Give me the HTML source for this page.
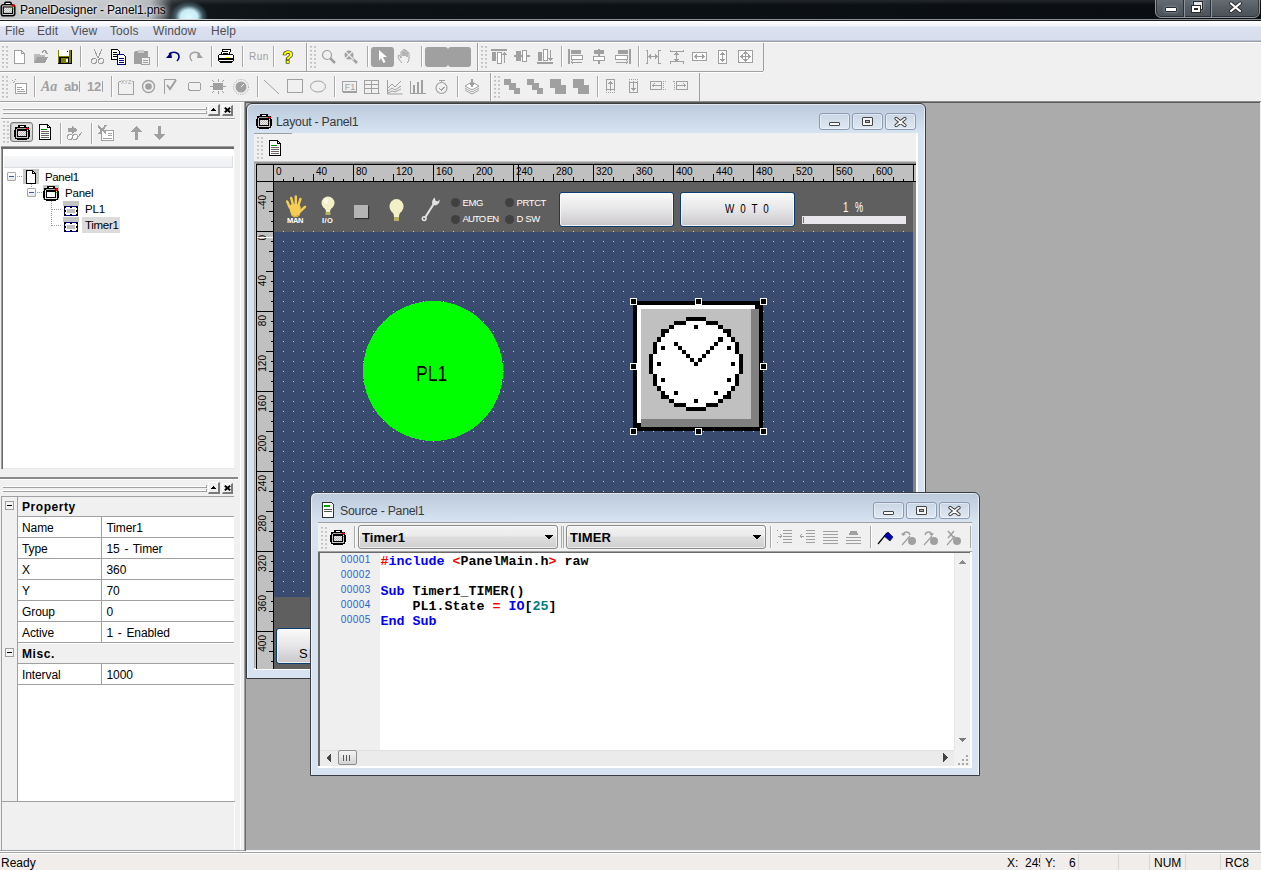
<!DOCTYPE html>
<html><head><meta charset="utf-8">
<style>
*{margin:0;padding:0;box-sizing:border-box}
html,body{width:1261px;height:870px;overflow:hidden;background:#f0f0f0;font-family:"Liberation Sans",sans-serif;font-size:12px;color:#000}
.a{position:absolute}
.t{position:absolute;white-space:nowrap;line-height:1}
svg.i{position:absolute;overflow:visible;width:16px;height:16px}
</style></head><body>
<div class="a" style="left:0px;top:0px;width:1261px;height:20px;background:linear-gradient(90deg,#c6c9cc 0px,#c3c6c9 120px,#b0b4b8 150px,#6a6f74 162px,#262b30 172px,#12171c 190px,#0d1217 300px,#0a0e13 1261px);"></div>
<div class="a" style="left:150px;top:0px;width:80px;height:20px;background:radial-gradient(ellipse 19px 16px at 39px 17px,rgba(220,250,255,1) 0%,rgba(205,242,252,.97) 45%,rgba(110,150,165,.5) 72%,rgba(60,80,90,0) 100%);"></div>
<div class="a" style="left:0px;top:0px;width:1261px;height:5px;background:linear-gradient(rgba(255,255,255,.10),rgba(255,255,255,0));"></div>
<div class="a" style="left:0px;top:19px;width:1261px;height:1px;background:linear-gradient(90deg,#e8eaec 0,#d0d4d8 200px,#8a9096 260px,#8a9096 1261px);"></div>
<div class="a" style="left:0px;top:20px;width:1261px;height:1px;background:#1a1a1a;"></div>
<svg class="i" style="left:0px;top:1px" viewBox="0 0 16 16"><rect x="4.8" y="1.3" width="6.4" height="3" rx="1.2" fill="#fff" stroke="#000" stroke-width="1.5"/><rect x="1.2" y="3.6" width="13.6" height="11.2" rx="2.2" fill="#c8c8c8" stroke="#000" stroke-width="1.45"/><rect x="3.3" y="6" width="9.2" height="6.4" fill="#eee" stroke="#000" stroke-width="1.1"/><path d="M4 7h1M6 7h1M8 7h1M10 7h1M5 8h1M7 8h1M9 8h1M11 8h1M4 9h1M6 9h1M8 9h1M10 9h1M5 10h1M7 10h1M9 10h1M11 10h1M4 11h1M6 11h1M8 11h1M10 11h1" stroke="#bbb" stroke-width="1" shape-rendering="crispEdges"/><path d="M3 4.6h9" stroke="#999" stroke-width=".8"/><path d="M13.2 3v3.2M11.6 4.6h3.2" stroke="#f00" stroke-width="1.3"/><rect x="12.7" y="6.2" width="1" height="1" fill="#ff0"/><rect x="12.7" y="7.2" width="1" height="1.2" fill="#0c0"/></svg>
<div class="t" style="left:20px;top:3.5px;font-size:12px;color:#000;letter-spacing:-0.15px;text-shadow:0 0 6px #fff,0 0 3px rgba(255,255,255,.8)">PanelDesigner - Panel1.pns</div>
<div class="a" style="left:1155px;top:-4px;width:105px;height:22px;border:1px solid #8c939a;border-radius:0 0 6px 6px;background:linear-gradient(#6a7178,#575e65 50%,#4a5157);box-shadow:inset 0 0 0 1px rgba(20,25,30,.55)"></div>
<div class="a" style="left:1183px;top:0px;width:1px;height:17px;background:#2a3036;"></div>
<div class="a" style="left:1184px;top:0px;width:1px;height:17px;background:#8c939a;"></div>
<div class="a" style="left:1210px;top:0px;width:1px;height:17px;background:#2a3036;"></div>
<div class="a" style="left:1211px;top:0px;width:1px;height:17px;background:#8c939a;"></div>
<div class="a" style="left:1165px;top:7px;width:12px;height:5px;background:#fff;border:1px solid #2a2a2a;border-radius:1px;box-shadow:0 0 3px rgba(170,210,255,.7)"></div>
<div class="a" style="left:1193px;top:1px;width:10px;height:9px;background:#e8e8e8;border:1px solid #2a2a2a;box-shadow:0 0 3px rgba(170,210,255,.7)"></div>
<div class="a" style="left:1191px;top:5px;width:10px;height:8px;background:#fff;border:1px solid #2a2a2a"></div>
<div class="a" style="left:1194px;top:8px;width:4px;height:2px;background:#7f95a8;border:1px solid #2a2a2a"></div>
<svg class="i" style="left:1229px;top:2px;width:13px;height:11px" viewBox="0 0 13 11"><path d="M2 1.5l9 7.5M11 1.5l-9 7.5" stroke="#2a2a2a" stroke-width="4" stroke-linecap="round"/><path d="M2 1.5l9 7.5M11 1.5l-9 7.5" stroke="#fff" stroke-width="2.2" stroke-linecap="round"/></svg>
<div class="a" style="left:0px;top:21px;width:1261px;height:19px;background:linear-gradient(#fdfdfe 0px,#f2f4fa 5px,#dde2f1 6px,#d8ddee 18px);"></div>
<div class="a" style="left:0px;top:40px;width:1261px;height:1px;background:#b7bdd3;"></div>
<div class="a" style="left:0px;top:41px;width:1261px;height:1px;background:#a0a0a0;"></div>
<div class="a" style="left:0px;top:42px;width:1261px;height:1px;background:#fff;"></div>
<div class="t" style="left:5px;top:24.6px;font-size:12px;color:#505050;letter-spacing:0.1px">File</div>
<div class="t" style="left:37px;top:24.6px;font-size:12px;color:#505050;letter-spacing:0.1px">Edit</div>
<div class="t" style="left:71px;top:24.6px;font-size:12px;color:#505050;letter-spacing:0.1px">View</div>
<div class="t" style="left:110px;top:24.6px;font-size:12px;color:#505050;letter-spacing:0.1px">Tools</div>
<div class="t" style="left:153px;top:24.6px;font-size:12px;color:#505050;letter-spacing:0.1px">Window</div>
<div class="t" style="left:211px;top:24.6px;font-size:12px;color:#505050;letter-spacing:0.1px">Help</div>
<div class="a" style="left:0px;top:851px;width:1261px;height:1px;background:#fff;"></div>
<div class="a" style="left:0px;top:852px;width:1261px;height:1px;background:#a0a0a0;"></div>
<div class="a" style="left:0px;top:853px;width:1261px;height:1px;background:#fff;"></div>
<div class="a" style="left:0px;top:854px;width:1261px;height:16px;background:#f0edeb;"></div>
<div class="t" style="left:1px;top:856.7px;font-size:12px;color:#000;">Ready</div>
<div class="a" style="left:1040px;top:854px;width:1px;height:16px;background:#d9d5d3;"></div>
<div class="a" style="left:1078px;top:854px;width:1px;height:16px;background:#d9d5d3;"></div>
<div class="a" style="left:1118px;top:854px;width:1px;height:16px;background:#d9d5d3;"></div>
<div class="a" style="left:1149px;top:854px;width:1px;height:16px;background:#d9d5d3;"></div>
<div class="a" style="left:1185px;top:854px;width:1px;height:16px;background:#d9d5d3;"></div>
<div class="a" style="left:1220px;top:854px;width:1px;height:16px;background:#d9d5d3;"></div>
<div class="t" style="left:1007px;top:856.7px;font-size:12px;color:#000;">X:</div>
<div class="a" style="left:1025px;top:853px;width:15px;height:17px;overflow:hidden"><div class="t" style="left:0px;top:3.7px;font-size:12px;color:#000;">245</div>
</div><div class="t" style="left:1045px;top:856.7px;font-size:12px;color:#000;">Y:</div>
<div class="t" style="left:1069px;top:856.7px;font-size:12px;color:#000;">6</div>
<div class="t" style="left:1154px;top:856.7px;font-size:12px;color:#000;">NUM</div>
<div class="t" style="left:1225px;top:856.7px;font-size:12px;color:#000;">RC8</div>
<div class="a" style="left:0px;top:71px;width:763px;height:1px;background:#a0a0a0;"></div>
<div class="a" style="left:0px;top:72px;width:763px;height:1px;background:#fff;"></div>
<div class="a" style="left:306px;top:43px;width:1px;height:28px;background:#a0a0a0;"></div>
<div class="a" style="left:307px;top:43px;width:1px;height:28px;background:#fff;"></div>
<div class="a" style="left:477px;top:43px;width:1px;height:28px;background:#a0a0a0;"></div>
<div class="a" style="left:478px;top:43px;width:1px;height:28px;background:#fff;"></div>
<div class="a" style="left:763px;top:43px;width:1px;height:28px;background:#a0a0a0;"></div>
<div class="a" style="left:490px;top:73px;width:1px;height:28px;background:#a0a0a0;"></div>
<div class="a" style="left:491px;top:73px;width:1px;height:28px;background:#fff;"></div>
<div class="a" style="left:699px;top:73px;width:1px;height:28px;background:#a0a0a0;"></div>
<div class="a" style="left:0px;top:101px;width:1261px;height:1px;background:#a0a0a0;"></div>
<div class="a" style="left:0px;top:102px;width:1261px;height:1px;background:#fff;"></div>
<div class="a" style="left:2px;top:46px;width:2px;height:22px;background:repeating-linear-gradient(180deg,#bdbdbd 0 1px,#d4d4d4 1px 2px,transparent 2px 4px);"></div>
<div class="a" style="left:6px;top:46px;width:2px;height:22px;background:repeating-linear-gradient(180deg,#c8c8c8 0 2px,transparent 2px 4px);"></div>
<div class="a" style="left:310px;top:46px;width:2px;height:22px;background:repeating-linear-gradient(180deg,#bdbdbd 0 1px,#d4d4d4 1px 2px,transparent 2px 4px);"></div>
<div class="a" style="left:314px;top:46px;width:2px;height:22px;background:repeating-linear-gradient(180deg,#c8c8c8 0 2px,transparent 2px 4px);"></div>
<div class="a" style="left:481px;top:46px;width:2px;height:22px;background:repeating-linear-gradient(180deg,#bdbdbd 0 1px,#d4d4d4 1px 2px,transparent 2px 4px);"></div>
<div class="a" style="left:485px;top:46px;width:2px;height:22px;background:repeating-linear-gradient(180deg,#c8c8c8 0 2px,transparent 2px 4px);"></div>
<div class="a" style="left:2px;top:76px;width:2px;height:22px;background:repeating-linear-gradient(180deg,#bdbdbd 0 1px,#d4d4d4 1px 2px,transparent 2px 4px);"></div>
<div class="a" style="left:6px;top:76px;width:2px;height:22px;background:repeating-linear-gradient(180deg,#c8c8c8 0 2px,transparent 2px 4px);"></div>
<div class="a" style="left:494px;top:76px;width:2px;height:22px;background:repeating-linear-gradient(180deg,#bdbdbd 0 1px,#d4d4d4 1px 2px,transparent 2px 4px);"></div>
<div class="a" style="left:498px;top:76px;width:2px;height:22px;background:repeating-linear-gradient(180deg,#c8c8c8 0 2px,transparent 2px 4px);"></div>
<div class="a" style="left:80px;top:46px;width:1px;height:21px;background:#a9a9a9;"></div>
<div class="a" style="left:81px;top:46px;width:1px;height:21px;background:#fff;"></div>
<div class="a" style="left:157px;top:46px;width:1px;height:21px;background:#a9a9a9;"></div>
<div class="a" style="left:158px;top:46px;width:1px;height:21px;background:#fff;"></div>
<div class="a" style="left:211px;top:46px;width:1px;height:21px;background:#a9a9a9;"></div>
<div class="a" style="left:212px;top:46px;width:1px;height:21px;background:#fff;"></div>
<div class="a" style="left:242px;top:46px;width:1px;height:21px;background:#a9a9a9;"></div>
<div class="a" style="left:243px;top:46px;width:1px;height:21px;background:#fff;"></div>
<div class="a" style="left:273px;top:46px;width:1px;height:21px;background:#a9a9a9;"></div>
<div class="a" style="left:274px;top:46px;width:1px;height:21px;background:#fff;"></div>
<div class="a" style="left:367px;top:46px;width:1px;height:21px;background:#a9a9a9;"></div>
<div class="a" style="left:368px;top:46px;width:1px;height:21px;background:#fff;"></div>
<div class="a" style="left:421px;top:46px;width:1px;height:21px;background:#a9a9a9;"></div>
<div class="a" style="left:422px;top:46px;width:1px;height:21px;background:#fff;"></div>
<div class="a" style="left:561px;top:46px;width:1px;height:21px;background:#a9a9a9;"></div>
<div class="a" style="left:562px;top:46px;width:1px;height:21px;background:#fff;"></div>
<div class="a" style="left:638px;top:46px;width:1px;height:21px;background:#a9a9a9;"></div>
<div class="a" style="left:639px;top:46px;width:1px;height:21px;background:#fff;"></div>
<div class="a" style="left:34px;top:76px;width:1px;height:21px;background:#a9a9a9;"></div>
<div class="a" style="left:35px;top:76px;width:1px;height:21px;background:#fff;"></div>
<div class="a" style="left:111px;top:76px;width:1px;height:21px;background:#a9a9a9;"></div>
<div class="a" style="left:112px;top:76px;width:1px;height:21px;background:#fff;"></div>
<div class="a" style="left:257px;top:76px;width:1px;height:21px;background:#a9a9a9;"></div>
<div class="a" style="left:258px;top:76px;width:1px;height:21px;background:#fff;"></div>
<div class="a" style="left:334px;top:76px;width:1px;height:21px;background:#a9a9a9;"></div>
<div class="a" style="left:335px;top:76px;width:1px;height:21px;background:#fff;"></div>
<div class="a" style="left:457px;top:76px;width:1px;height:21px;background:#a9a9a9;"></div>
<div class="a" style="left:458px;top:76px;width:1px;height:21px;background:#fff;"></div>
<div class="a" style="left:597px;top:76px;width:1px;height:21px;background:#a9a9a9;"></div>
<div class="a" style="left:598px;top:76px;width:1px;height:21px;background:#fff;"></div>
<svg class="i" style="left:12px;top:49px;width:16px;height:16px" viewBox="0 0 16 16" shape-rendering="crispEdges"><path d="M2.5 1.5h7l3 3v10h-10z M9.5 1.5v3h3" fill="#fff" stroke="#a0a0a0"/></svg>
<svg class="i" style="left:33px;top:49px;width:16px;height:16px" viewBox="0 0 16 16" shape-rendering="crispEdges"><path d="M1 5h5l1 1h5v2H4l-3 6z" fill="#bbb"/><path d="M1 14l3-6h11l-3 6z" fill="#a0a0a0"/><path d="M9 4c1-3 4-3 5 0" fill="none" stroke="#a0a0a0" stroke-width="1.3"/><path d="M12 3l3 1-1 2z" fill="#a0a0a0"/></svg>
<svg class="i" style="left:57px;top:49px;width:16px;height:16px" viewBox="0 0 16 16" shape-rendering="crispEdges"><rect x="0.5" y="0.5" width="14" height="14" fill="#000"/><rect x="2" y="1" width="10" height="6" fill="#fff"/><rect x="1" y="1" width="1" height="13" fill="#808000"/><rect x="12" y="1" width="2" height="13" fill="#808000"/><rect x="2" y="7" width="10" height="1" fill="#808000"/><rect x="4" y="9" width="7" height="5" fill="#808000"/><rect x="9" y="10" width="2" height="3" fill="#fff"/><rect x="10" y="2" width="1" height="1" fill="#000"/></svg>
<svg class="i" style="left:90px;top:49px;width:16px;height:16px" viewBox="0 0 16 16" shape-rendering="crispEdges"><path d="M4 0l4 9M12 0l-4 9" stroke="#a0a0a0" fill="none"/><circle cx="4" cy="12" r="2.5" fill="none" stroke="#a0a0a0"/><circle cx="11" cy="12" r="2.5" fill="none" stroke="#a0a0a0"/></svg>
<svg class="i" style="left:111px;top:49px;width:16px;height:16px" viewBox="0 0 16 16" shape-rendering="crispEdges"><path d="M0.5 0.5h6l2 2v8h-8z" fill="#fff" stroke="#000"/><path d="M2 3h4M2 5h4M2 7h4" stroke="#000"/><path d="M6.5 5.5h6l2 2v8h-8z" fill="#fff" stroke="#000080"/><path d="M8 9h5M8 11h5M8 13h5" stroke="#000080"/></svg>
<svg class="i" style="left:134px;top:49px;width:16px;height:16px" viewBox="0 0 16 16" shape-rendering="crispEdges"><rect x="0" y="2" width="14" height="13" rx="2" fill="#a0a0a0"/><rect x="4" y="1" width="6" height="3" fill="#ccc"/><path d="M7.5 8.5h8v7h-8z" fill="#eee" stroke="#a0a0a0"/><path d="M9 11h5M9 13h5" stroke="#a0a0a0"/></svg>
<svg class="i" style="left:166px;top:49px;width:16px;height:16px" viewBox="0 0 16 16" shape-rendering="crispEdges"><path d="M3 5c4-3 10-2 10 3c0 2-1 3-2 4" fill="none" stroke="#000080" stroke-width="1.6" shape-rendering="auto"/><path d="M0 9l5-6 1 6z" fill="#000080" shape-rendering="auto"/></svg>
<svg class="i" style="left:188px;top:49px;width:16px;height:16px" viewBox="0 0 16 16" shape-rendering="crispEdges"><path d="M12 5c-4-3-10-2-10 3c0 2 1 3 2 4" fill="none" stroke="#a0a0a0" stroke-width="1.4" shape-rendering="auto"/><path d="M15 9l-5-6-1 6z" fill="#a0a0a0" shape-rendering="auto"/></svg>
<svg class="i" style="left:218px;top:49px;width:16px;height:16px" viewBox="0 0 16 16" shape-rendering="crispEdges"><path d="M4.5 0.5h8l-1 5h-8z" fill="#fff" stroke="#000"/><path d="M5 2h5M5 4h5" stroke="#000"/><rect x="0.5" y="5.5" width="15" height="7" rx="2" fill="#fff" stroke="#000"/><rect x="0" y="9" width="16" height="2" fill="#000"/><rect x="7" y="8" width="4" height="1" fill="#ff0"/><rect x="2" y="12" width="12" height="2" fill="#000"/></svg>
<div class="t" style="left:249px;top:52px;font-size:10px;color:#a0a0a0;letter-spacing:0.5px">Run</div>
<svg class="i" style="left:281px;top:49px;width:16px;height:16px" viewBox="0 0 16 16" shape-rendering="crispEdges"><text x="7" y="14" font-family="Liberation Sans" font-weight="bold" font-size="17" text-anchor="middle" fill="#ff0" stroke="#000" stroke-width="1.2" paint-order="stroke">?</text></svg>
<svg class="i" style="left:321px;top:49px;width:16px;height:16px" viewBox="0 0 16 16" shape-rendering="crispEdges"><circle cx="6" cy="6" r="4.5" fill="none" stroke="#a0a0a0" stroke-width="1.2" shape-rendering="auto"/><path d="M9 9l5 5" stroke="#a0a0a0" stroke-width="2.5" shape-rendering="auto"/></svg>
<svg class="i" style="left:343px;top:49px;width:16px;height:16px" viewBox="0 0 16 16" shape-rendering="crispEdges"><circle cx="6" cy="6" r="4.5" fill="#a0a0a0" shape-rendering="auto"/><path d="M9 9l5 5" stroke="#a0a0a0" stroke-width="2.5" shape-rendering="auto"/><path d="M1 1l10 10M11 1L1 11" stroke="#eee" stroke-width="1.2" shape-rendering="auto"/></svg>
<div class="a" style="left:371px;top:47px;width:23px;height:20px;background:#a0a0a0;border-radius:3px"></div>
<svg class="i" style="left:374px;top:49px;width:16px;height:16px" viewBox="0 0 16 16" shape-rendering="crispEdges"><path d="M5 1l8 7h-4l2.5 5-2 1-2.5-5-2 3z" fill="#fff" shape-rendering="auto"/></svg>
<svg class="i" style="left:397px;top:49px;width:16px;height:16px" viewBox="0 0 16 16" shape-rendering="crispEdges"><path d="M5 14c-2-2-4-5-4-7 0-1 1-1 2 0l1 2V3c0-1 2-1 2 0v4V1c0-1 2-1 2 0v6V2c0-1 2-1 2 0v6V4c0-1 2-1 2 0v5c0 3-1 4-2 5" fill="none" stroke="#a0a0a0" shape-rendering="auto"/></svg>
<div class="a" style="left:425px;top:47px;width:23px;height:20px;background:#a0a0a0;border-radius:3px"></div>
<div class="a" style="left:448px;top:47px;width:23px;height:20px;background:#a0a0a0;border-radius:3px"></div>
<svg class="i" style="left:491px;top:49px;width:16px;height:16px" viewBox="0 0 16 16" shape-rendering="crispEdges"><rect x="0" y="0" width="16" height="2" fill="#a0a0a0"/><rect x="1" y="3" width="4" height="9" fill="#a0a0a0"/><rect x="6.5" y="3.5" width="4" height="11" fill="#fff" stroke="#a0a0a0"/><path d="M13.5 4v10M11.5 6l2-2 2 2" stroke="#a0a0a0" fill="none"/></svg>
<svg class="i" style="left:514px;top:49px;width:16px;height:16px" viewBox="0 0 16 16" shape-rendering="crispEdges"><rect x="0" y="6" width="16" height="2" fill="#a0a0a0"/><rect x="2" y="2" width="5" height="10" fill="#a0a0a0"/><rect x="8.5" y="1.5" width="4" height="11" fill="#fff" stroke="#a0a0a0"/></svg>
<svg class="i" style="left:537px;top:49px;width:16px;height:16px" viewBox="0 0 16 16" shape-rendering="crispEdges"><rect x="0" y="13" width="16" height="2" fill="#a0a0a0"/><rect x="1" y="3" width="4" height="9" fill="#a0a0a0"/><rect x="6.5" y="0.5" width="4" height="11" fill="#fff" stroke="#a0a0a0"/><path d="M13.5 1v10M11.5 9l2 2 2-2" stroke="#a0a0a0" fill="none"/></svg>
<svg class="i" style="left:568px;top:49px;width:16px;height:16px" viewBox="0 0 16 16" shape-rendering="crispEdges"><rect x="0" y="0" width="2" height="15" fill="#a0a0a0"/><rect x="3" y="1" width="10" height="4" fill="#a0a0a0"/><rect x="3.5" y="6.5" width="11" height="4" fill="#fff" stroke="#a0a0a0"/><path d="M3 13h11M5 11l-2 2 2 2" stroke="#a0a0a0" fill="none"/></svg>
<svg class="i" style="left:592px;top:49px;width:16px;height:16px" viewBox="0 0 16 16" shape-rendering="crispEdges"><rect x="6" y="0" width="2" height="15" fill="#a0a0a0"/><rect x="2" y="1" width="10" height="4" fill="#a0a0a0"/><rect x="1.5" y="7.5" width="11" height="4" fill="#fff" stroke="#a0a0a0"/></svg>
<svg class="i" style="left:615px;top:49px;width:16px;height:16px" viewBox="0 0 16 16" shape-rendering="crispEdges"><rect x="14" y="0" width="2" height="15" fill="#a0a0a0"/><rect x="3" y="1" width="10" height="4" fill="#a0a0a0"/><rect x="0.5" y="6.5" width="12" height="4" fill="#fff" stroke="#a0a0a0"/><path d="M1 13h12M11 11l2 2-2 2" stroke="#a0a0a0" fill="none"/></svg>
<svg class="i" style="left:645px;top:49px;width:16px;height:16px" viewBox="0 0 16 16" shape-rendering="crispEdges"><path d="M0.5 1h2v13h-2M15.5 1h-2v13h2M4 7.5h8M6 5.5l-2 2 2 2M10 5.5l2 2-2 2" stroke="#a0a0a0" fill="none"/></svg>
<svg class="i" style="left:669px;top:49px;width:16px;height:16px" viewBox="0 0 16 16" shape-rendering="crispEdges"><path d="M1 0.5v2h13v-2M1 14.5v-2h13v2M7.5 4v8M5.5 6l2-2 2 2M5.5 10l2 2 2-2" stroke="#a0a0a0" fill="none"/></svg>
<svg class="i" style="left:692px;top:49px;width:16px;height:16px" viewBox="0 0 16 16" shape-rendering="crispEdges"><rect x="0.5" y="3.5" width="14" height="8" fill="#fff" stroke="#a0a0a0"/><path d="M3 7.5h9M5 5.5l-2 2 2 2M10 5.5l2 2-2 2" stroke="#a0a0a0" fill="none"/></svg>
<svg class="i" style="left:718px;top:49px;width:16px;height:16px" viewBox="0 0 16 16" shape-rendering="crispEdges"><rect x="0.5" y="1.5" width="8" height="13" fill="#fff" stroke="#a0a0a0"/><path d="M4.5 4v8M2.5 6l2-2 2 2M2.5 10l2 2 2-2" stroke="#a0a0a0" fill="none"/></svg>
<svg class="i" style="left:738px;top:49px;width:16px;height:16px" viewBox="0 0 16 16" shape-rendering="crispEdges"><rect x="0.5" y="1.5" width="14" height="12" fill="#fff" stroke="#a0a0a0"/><path d="M7.5 3v9M3 7.5h9M5.5 5l2-2 2 2M5.5 10l2 2 2-2M5 5.5l-2 2 2 2M10 5.5l2 2-2 2" stroke="#a0a0a0" fill="none"/></svg>
<svg class="i" style="left:12px;top:79px;width:16px;height:16px" viewBox="0 0 16 16" shape-rendering="crispEdges"><rect x="3.5" y="4.5" width="11" height="10" fill="#fff" stroke="#a0a0a0"/><path d="M5 8h5M5 10h3M9 10h3M5 12h8" stroke="#a0a0a0"/><path d="M0 1h1M2 2h1M1 3h1M3 0h1" stroke="#a0a0a0"/></svg>
<div class="t" style="left:41px;top:80px;font-size:14px;color:#a0a0a0;font-family:Liberation Serif;font-style:italic;font-weight:bold">Aa</div>
<div class="t" style="left:64px;top:80px;font-size:13px;color:#a0a0a0;font-weight:bold;letter-spacing:-0.5px">ab</div><div class="a" style="left:79px;top:81px;width:1px;height:11px;background:#a0a0a0;"></div>
<div class="t" style="left:87px;top:80px;font-size:13px;color:#a0a0a0;font-weight:bold;letter-spacing:-0.3px">12</div><div class="a" style="left:102px;top:81px;width:1px;height:11px;background:#a0a0a0;"></div>
<svg class="i" style="left:118px;top:79px;width:16px;height:16px" viewBox="0 0 16 16" shape-rendering="crispEdges"><path d="M0.5 2.5h2M13.5 2.5h2v13h-15v-13" fill="none" stroke="#a0a0a0"/><text x="8" y="5" font-size="5.5" text-anchor="middle" fill="#a0a0a0" font-family="Liberation Sans">XYZ</text></svg>
<svg class="i" style="left:141px;top:79px;width:16px;height:16px" viewBox="0 0 16 16" shape-rendering="crispEdges"><circle cx="7.5" cy="7.5" r="6" fill="none" stroke="#a0a0a0" stroke-width="1.4" shape-rendering="auto"/><circle cx="7.5" cy="7.5" r="3.3" fill="#a0a0a0" shape-rendering="auto"/></svg>
<svg class="i" style="left:164px;top:79px;width:16px;height:16px" viewBox="0 0 16 16" shape-rendering="crispEdges"><path d="M0.5 14.5V0.5h11" fill="none" stroke="#a0a0a0" stroke-width="1.5"/><path d="M3 6l3 4 6-9" fill="none" stroke="#a0a0a0" stroke-width="2" shape-rendering="auto"/></svg>
<svg class="i" style="left:188px;top:79px;width:16px;height:16px" viewBox="0 0 16 16" shape-rendering="crispEdges"><rect x="0.5" y="3.5" width="12" height="8" rx="2" fill="none" stroke="#a0a0a0" stroke-width="1.2"/></svg>
<svg class="i" style="left:210px;top:79px;width:16px;height:16px" viewBox="0 0 16 16" shape-rendering="crispEdges"><rect x="3" y="4" width="10" height="7" rx="1" fill="#a0a0a0"/><path d="M8 0v3M0 7h3M13 7h3M2 1l2 2M14 1l-2 2M2 14l2-2M14 14l-2-2M8 12v3" stroke="#a0a0a0"/></svg>
<svg class="i" style="left:233px;top:79px;width:16px;height:16px" viewBox="0 0 16 16" shape-rendering="crispEdges"><circle cx="8" cy="8" r="5.5" fill="#a0a0a0" shape-rendering="auto"/><circle cx="8" cy="8" r="7.5" fill="none" stroke="#a0a0a0" stroke-dasharray="1 1.3" shape-rendering="auto"/><path d="M8 8l3-3" stroke="#eee"/></svg>
<svg class="i" style="left:264px;top:79px;width:16px;height:16px" viewBox="0 0 16 16" shape-rendering="crispEdges"><path d="M0 1l15 14" stroke="#a0a0a0" shape-rendering="auto"/></svg>
<svg class="i" style="left:287px;top:79px;width:16px;height:16px" viewBox="0 0 16 16" shape-rendering="crispEdges"><rect x="0.5" y="0.5" width="15" height="13" fill="none" stroke="#a0a0a0"/></svg>
<svg class="i" style="left:310px;top:79px;width:16px;height:16px" viewBox="0 0 16 16" shape-rendering="crispEdges"><ellipse cx="8" cy="7.5" rx="7.5" ry="5.5" fill="none" stroke="#a0a0a0" shape-rendering="auto"/></svg>
<svg class="i" style="left:342px;top:79px;width:16px;height:16px" viewBox="0 0 16 16" shape-rendering="crispEdges"><rect x="0.5" y="2.5" width="14" height="10" rx="1.5" fill="none" stroke="#a0a0a0" stroke-width="1.2"/><path d="M1 13.5h14" stroke="#a0a0a0" stroke-width="1.5"/><text x="8" y="11" font-size="9" text-anchor="middle" fill="#a0a0a0" font-family="Liberation Sans">F1</text></svg>
<svg class="i" style="left:364px;top:79px;width:16px;height:16px" viewBox="0 0 16 16" shape-rendering="crispEdges"><rect x="0.5" y="1.5" width="14" height="13" fill="none" stroke="#a0a0a0"/><path d="M1 5.5h14M1 9.5h14M7.5 2v12M1 14h15" stroke="#a0a0a0"/></svg>
<svg class="i" style="left:387px;top:79px;width:16px;height:16px" viewBox="0 0 16 16" shape-rendering="crispEdges"><path d="M0.5 1v14h15M1 9l4-4 3 3 6-6M1 12l4-3 3 2 6-4M1 14l4-2 3 1 6-3" fill="none" stroke="#a0a0a0" shape-rendering="auto"/></svg>
<svg class="i" style="left:410px;top:79px;width:16px;height:16px" viewBox="0 0 16 16" shape-rendering="crispEdges"><path d="M0.5 2v12.5h15" fill="none" stroke="#a0a0a0"/><rect x="3" y="6" width="2" height="8" fill="#a0a0a0"/><rect x="7" y="3" width="2" height="11" fill="#a0a0a0"/><rect x="11" y="1" width="2" height="13" fill="#a0a0a0"/></svg>
<svg class="i" style="left:434px;top:79px;width:16px;height:16px" viewBox="0 0 16 16" shape-rendering="crispEdges"><circle cx="7.5" cy="9" r="5.5" fill="none" stroke="#a0a0a0" stroke-width="1.2" shape-rendering="auto"/><path d="M5 1.5h6M7.5 2v2M5 9l2.5 2 3-3" stroke="#a0a0a0" fill="none"/></svg>
<svg class="i" style="left:464px;top:79px;width:16px;height:16px" viewBox="0 0 16 16" shape-rendering="crispEdges"><path d="M1 9l7 4 7-4M1 11l7 4 7-4M1 7l7-4 7 4-7 4z" fill="#fff" stroke="#a0a0a0" shape-rendering="auto"/><path d="M8 0v6M6 4l2 3 2-3" stroke="#a0a0a0" stroke-width="1.5"/></svg>
<svg class="i" style="left:504px;top:79px;width:16px;height:16px" viewBox="0 0 16 16" shape-rendering="crispEdges"><path d="M0 0h7v4h5v5h4v6H10v-4H5V6H0z" fill="#a0a0a0"/></svg>
<svg class="i" style="left:527px;top:79px;width:16px;height:16px" viewBox="0 0 16 16" shape-rendering="crispEdges"><path d="M0 0h7v4h5v5h4v6H10v-4H5V6H0z" fill="#a0a0a0"/></svg>
<svg class="i" style="left:550px;top:79px;width:16px;height:16px" viewBox="0 0 16 16" shape-rendering="crispEdges"><path d="M0 0h11v6h5v9H5V9H0z" fill="#a0a0a0"/></svg>
<svg class="i" style="left:573px;top:79px;width:16px;height:16px" viewBox="0 0 16 16" shape-rendering="crispEdges"><path d="M0 0h11v6h5v9H5V9H0z" fill="#a0a0a0"/></svg>
<svg class="i" style="left:606px;top:79px;width:16px;height:16px" viewBox="0 0 16 16" shape-rendering="crispEdges"><rect x="0.5" y="0.5" width="8" height="10" fill="none" stroke="#a0a0a0"/><path d="M4.5 2v10M2.5 5l2-2 2 2M0 13h1M2 13h1M4 13h1M6 13h1M8 13h1M0 11h1M8 11h1" stroke="#a0a0a0" fill="none"/></svg>
<svg class="i" style="left:629px;top:79px;width:16px;height:16px" viewBox="0 0 16 16" shape-rendering="crispEdges"><rect x="0.5" y="3.5" width="8" height="10" fill="none" stroke="#a0a0a0"/><path d="M4.5 2v10M2.5 9l2 2 2-2M0 0h1M2 0h1M4 0h1M6 0h1M8 0h1M0 2h1M8 2h1" stroke="#a0a0a0" fill="none"/></svg>
<svg class="i" style="left:650px;top:79px;width:16px;height:16px" viewBox="0 0 16 16" shape-rendering="crispEdges"><rect x="0.5" y="2.5" width="11" height="8" fill="none" stroke="#a0a0a0"/><path d="M2 6.5h10M4.5 4.5l-2 2 2 2M13 2v1M13 4v1M13 6v1M13 8v1M13 10v1M15 2v1M15 10v1" stroke="#a0a0a0" fill="none"/></svg>
<svg class="i" style="left:673px;top:79px;width:16px;height:16px" viewBox="0 0 16 16" shape-rendering="crispEdges"><rect x="3.5" y="2.5" width="11" height="8" fill="none" stroke="#a0a0a0"/><path d="M3 6.5h10M10.5 4.5l2 2-2 2M1 2v1M1 4v1M1 6v1M1 8v1M1 10v1M0 2v1" stroke="#a0a0a0" fill="none"/></svg>
<div class="a" style="left:240px;top:102px;width:1px;height:748px;background:#fff;"></div>
<div class="a" style="left:3px;top:108px;width:203px;height:1px;background:#fff;"></div>
<div class="a" style="left:3px;top:109px;width:204px;height:1px;background:#a0a0a0;"></div>
<div class="a" style="left:206px;top:107px;width:1px;height:2px;background:#a0a0a0;"></div>
<div class="a" style="left:3px;top:112px;width:203px;height:1px;background:#fff;"></div>
<div class="a" style="left:3px;top:113px;width:204px;height:1px;background:#a0a0a0;"></div>
<div class="a" style="left:206px;top:111px;width:1px;height:2px;background:#a0a0a0;"></div>
<div class="a" style="left:208px;top:104px;width:12px;height:12px;background:#f0f0f0;border-right:2px solid #7a7a7a;border-bottom:2px solid #7a7a7a;border-top:1px solid #fff;border-left:1px solid #fff"></div>
<svg class="i" style="left:211px;top:108px;width:5px;height:3px" viewBox="0 0 5 3" shape-rendering="crispEdges"><path d="M0 3h5L2.5 0z" fill="#000"/></svg>
<div class="a" style="left:222px;top:105px;width:11px;height:11px;background:#f0f0f0;border-right:2px solid #7a7a7a;border-bottom:2px solid #7a7a7a;border-top:1px solid #fff;border-left:1px solid #fff"></div>
<svg class="i" style="left:224px;top:107px;width:7px;height:6px" viewBox="0 0 7 6" shape-rendering="crispEdges"><path d="M0.8 0.8l5.4 4.4M6.2 0.8L0.8 5.2" stroke="#000" stroke-width="2" shape-rendering="auto"/></svg>
<div class="a" style="left:1px;top:118px;width:234px;height:1px;background:#a0a0a0;"></div>
<div class="a" style="left:1px;top:119px;width:234px;height:1px;background:#fff;"></div>
<div class="a" style="left:3px;top:121px;width:2px;height:24px;background:repeating-linear-gradient(180deg,#bdbdbd 0 1px,#d4d4d4 1px 2px,transparent 2px 4px);"></div>
<div class="a" style="left:7px;top:121px;width:2px;height:24px;background:repeating-linear-gradient(180deg,#c8c8c8 0 2px,transparent 2px 4px);"></div>
<div class="a" style="left:10px;top:122px;width:23px;height:20px;background:linear-gradient(#e4e4e4,#d2d2d2);border:1px solid #7a7a7a;border-radius:3px;box-shadow:inset 1px 1px 1px rgba(0,0,0,.15)"></div>
<svg class="i" style="left:14px;top:124px;width:16px;height:16px" viewBox="0 0 16 16" shape-rendering="crispEdges"><rect x="4.8" y="1.3" width="6.4" height="3" rx="1.2" fill="#fff" stroke="#000" stroke-width="1.5"/><rect x="1.2" y="3.6" width="13.6" height="11.2" rx="2.2" fill="#c8c8c8" stroke="#000" stroke-width="1.45"/><rect x="3.3" y="6" width="9.2" height="6.4" fill="#eee" stroke="#000" stroke-width="1.1"/><path d="M4 7h1M6 7h1M8 7h1M10 7h1M5 8h1M7 8h1M9 8h1M11 8h1M4 9h1M6 9h1M8 9h1M10 9h1M5 10h1M7 10h1M9 10h1M11 10h1M4 11h1M6 11h1M8 11h1M10 11h1" stroke="#bbb" stroke-width="1" shape-rendering="crispEdges"/><path d="M3 4.6h9" stroke="#999" stroke-width=".8"/><path d="M13.2 3v3.2M11.6 4.6h3.2" stroke="#f00" stroke-width="1.3"/><rect x="12.7" y="6.2" width="1" height="1" fill="#ff0"/><rect x="12.7" y="7.2" width="1" height="1.2" fill="#0c0"/></svg>
<svg class="i" style="left:38px;top:124px;width:16px;height:16px" viewBox="0 0 16 16" shape-rendering="crispEdges"><path d="M1.5 0.5h8l3 3v12h-11z" fill="#fff" stroke="#000"/><path d="M9.5 0.5v3h3" fill="none" stroke="#000"/><path d="M3 5h6" stroke="#080" stroke-width="1"/><path d="M3 7h8M3 9h8M3 11h8M3 13h8" stroke="#666"/></svg>
<div class="a" style="left:60px;top:123px;width:1px;height:21px;background:#a9a9a9;"></div>
<div class="a" style="left:61px;top:123px;width:1px;height:21px;background:#fff;"></div>
<svg class="i" style="left:67px;top:125px;width:16px;height:16px" viewBox="0 0 16 16" shape-rendering="crispEdges"><path d="M5 1l6 4-6 4V7H1V3h4z" fill="#a0a0a0"/><circle cx="3" cy="12" r="2.5" fill="#fff" stroke="#a0a0a0"/><circle cx="8" cy="12" r="2.5" fill="#fff" stroke="#a0a0a0"/><path d="M11 12l4-5" stroke="#a0a0a0"/></svg>
<div class="a" style="left:91px;top:123px;width:1px;height:21px;background:#a9a9a9;"></div>
<div class="a" style="left:92px;top:123px;width:1px;height:21px;background:#fff;"></div>
<svg class="i" style="left:98px;top:125px;width:16px;height:16px" viewBox="0 0 16 16" shape-rendering="crispEdges"><rect x="3.5" y="5.5" width="12" height="10" fill="#fff" stroke="#a0a0a0"/><path d="M10 8h4M10 10h4M5 13h9" stroke="#a0a0a0"/><path d="M0 1l8 7M8 0L1 9" stroke="#a0a0a0" stroke-width="2"/></svg>
<svg class="i" style="left:129px;top:125px;width:16px;height:16px" viewBox="0 0 16 16" shape-rendering="crispEdges"><path d="M7 1l6 6H9v8H6V7H1z" fill="#a0a0a0"/></svg>
<svg class="i" style="left:152px;top:125px;width:16px;height:16px" viewBox="0 0 16 16" shape-rendering="crispEdges"><path d="M7 15l6-6H9V1H6v8H1z" fill="#a0a0a0"/></svg>
<div class="a" style="left:1px;top:146px;width:233px;height:1px;background:#a0a0a0;"></div>
<div class="a" style="left:1px;top:147px;width:233px;height:2px;background:#6a6a6a;"></div>
<div class="a" style="left:1px;top:149px;width:1px;height:320px;background:#a0a0a0;"></div>
<div class="a" style="left:2px;top:149px;width:1px;height:320px;background:#6a6a6a;"></div>
<div class="a" style="left:3px;top:149px;width:231px;height:319px;background:#fff;"></div>
<div class="a" style="left:234px;top:149px;width:1px;height:320px;background:#f4f4f4;"></div>
<div class="a" style="left:3px;top:468px;width:232px;height:1px;background:#e8e8e8;"></div>
<div class="a" style="left:4px;top:156px;width:228px;height:11px;background:linear-gradient(#f6f7f9,#eeeff2);"></div>
<div class="a" style="left:4px;top:167px;width:229px;height:1px;background:#dedede;"></div>
<div class="a" style="left:232px;top:156px;width:1px;height:12px;background:#e0e0e0;"></div>
<div class="a" style="left:7px;top:172px;width:9px;height:9px;border:1px solid #a8a8a8;background:linear-gradient(#fff,#e6e6e6);border-radius:1px"></div><div class="a" style="left:9px;top:176px;width:5px;height:1px;background:#3b5aa3;"></div>
<div class="a" style="left:17px;top:176px;width:5px;height:1px;background:repeating-linear-gradient(90deg,#9a9a9a 0 1px,transparent 1px 2px);"></div>
<div class="a" style="left:23px;top:169px;width:16px;height:15px;background:#c8c8c8;"></div>
<svg class="i" style="left:23px;top:169px;width:16px;height:16px" viewBox="0 0 16 16" shape-rendering="crispEdges"><path d="M3.5 1.5h6l3 3v10h-9z" fill="#fff" stroke="#000"/><path d="M9.5 1.5v3h3" fill="none" stroke="#000"/></svg>
<div class="t" style="left:45px;top:172px;font-size:11.5px;color:#000;letter-spacing:-0.35px">Panel1</div>
<div class="a" style="left:31px;top:184px;width:1px;height:5px;background:repeating-linear-gradient(180deg,#9a9a9a 0 1px,transparent 1px 2px);"></div>
<div class="a" style="left:27px;top:188px;width:9px;height:9px;border:1px solid #a8a8a8;background:linear-gradient(#fff,#e6e6e6);border-radius:1px"></div><div class="a" style="left:29px;top:192px;width:5px;height:1px;background:#3b5aa3;"></div>
<div class="a" style="left:37px;top:192px;width:5px;height:1px;background:repeating-linear-gradient(90deg,#9a9a9a 0 1px,transparent 1px 2px);"></div>
<div class="a" style="left:43px;top:185px;width:16px;height:15px;background:#c8c8c8;"></div>
<svg class="i" style="left:43px;top:185px;width:16px;height:16px" viewBox="0 0 16 16" shape-rendering="crispEdges"><rect x="4.8" y="1.3" width="6.4" height="3" rx="1.2" fill="#fff" stroke="#000" stroke-width="1.5"/><rect x="1.2" y="3.6" width="13.6" height="11.2" rx="2.2" fill="#e8e8e8" stroke="#000" stroke-width="1.45"/><rect x="3.3" y="6" width="9.2" height="6.4" fill="#fff" stroke="#000" stroke-width="1.1"/><path d="M4 7h1M6 7h1M8 7h1M10 7h1M5 8h1M7 8h1M9 8h1M11 8h1M4 9h1M6 9h1M8 9h1M10 9h1M5 10h1M7 10h1M9 10h1M11 10h1M4 11h1M6 11h1M8 11h1M10 11h1" stroke="#fff" stroke-width="1" shape-rendering="crispEdges"/><path d="M3 4.6h9" stroke="#999" stroke-width=".8"/><path d="M13.2 3v3.2M11.6 4.6h3.2" stroke="#f00" stroke-width="1.3"/><rect x="12.7" y="6.2" width="1" height="1" fill="#ff0"/><rect x="12.7" y="7.2" width="1" height="1.2" fill="#0c0"/></svg>
<div class="t" style="left:65px;top:188px;font-size:11.5px;color:#000;letter-spacing:-0.2px">Panel</div>
<div class="a" style="left:51px;top:201px;width:1px;height:25px;background:repeating-linear-gradient(180deg,#9a9a9a 0 1px,transparent 1px 2px);"></div>
<div class="a" style="left:52px;top:209px;width:10px;height:1px;background:repeating-linear-gradient(90deg,#9a9a9a 0 1px,transparent 1px 2px);"></div>
<div class="a" style="left:52px;top:225px;width:10px;height:1px;background:repeating-linear-gradient(90deg,#9a9a9a 0 1px,transparent 1px 2px);"></div>
<svg class="i" style="left:63px;top:201px;width:16px;height:16px" viewBox="0 0 16 16" shape-rendering="crispEdges"><rect x="0" y="0" width="16" height="5" fill="#c4c4c4"/><rect x="1.5" y="5.5" width="13" height="8.5" fill="#fff" stroke="#0000a0"/><rect x="4" y="8" width="8" height="4" fill="#c0c0c0"/><path d="M3.5 7.5h8" stroke="#fff"/><g fill="#000"><circle cx="2" cy="6" r="1.1"/><circle cx="8" cy="6" r="1.1"/><circle cx="14" cy="6" r="1.1"/><circle cx="2" cy="10" r="1.1"/><circle cx="14" cy="10" r="1.1"/><circle cx="2" cy="14" r="1.1"/><circle cx="8" cy="14" r="1.1"/><circle cx="14" cy="14" r="1.1"/></g></svg>
<div class="t" style="left:85px;top:204px;font-size:11.5px;color:#000;letter-spacing:-0.2px">PL1</div>
<svg class="i" style="left:63px;top:217px;width:16px;height:16px" viewBox="0 0 16 16" shape-rendering="crispEdges"><rect x="0" y="0" width="16" height="5" fill="#c4c4c4"/><rect x="1.5" y="5.5" width="13" height="8.5" fill="#fff" stroke="#0000a0"/><rect x="4" y="8" width="8" height="4" fill="#c0c0c0"/><path d="M3.5 7.5h8" stroke="#fff"/><g fill="#000"><circle cx="2" cy="6" r="1.1"/><circle cx="8" cy="6" r="1.1"/><circle cx="14" cy="6" r="1.1"/><circle cx="2" cy="10" r="1.1"/><circle cx="14" cy="10" r="1.1"/><circle cx="2" cy="14" r="1.1"/><circle cx="8" cy="14" r="1.1"/><circle cx="14" cy="14" r="1.1"/></g></svg>
<div class="a" style="left:82px;top:217px;width:38px;height:16px;background:#dcdcdc;"></div>
<div class="t" style="left:85px;top:220px;font-size:11.5px;color:#000;letter-spacing:-0.3px">Timer1</div>
<div class="a" style="left:0px;top:477px;width:238px;height:2px;background:#8a8a8a;"></div>
<div class="a" style="left:0px;top:479px;width:238px;height:1px;background:#fff;"></div>
<div class="a" style="left:3px;top:486px;width:203px;height:1px;background:#fff;"></div>
<div class="a" style="left:3px;top:487px;width:204px;height:1px;background:#a0a0a0;"></div>
<div class="a" style="left:206px;top:485px;width:1px;height:2px;background:#a0a0a0;"></div>
<div class="a" style="left:3px;top:490px;width:203px;height:1px;background:#fff;"></div>
<div class="a" style="left:3px;top:491px;width:204px;height:1px;background:#a0a0a0;"></div>
<div class="a" style="left:206px;top:489px;width:1px;height:2px;background:#a0a0a0;"></div>
<div class="a" style="left:208px;top:482px;width:12px;height:12px;background:#f0f0f0;border-right:2px solid #7a7a7a;border-bottom:2px solid #7a7a7a;border-top:1px solid #fff;border-left:1px solid #fff"></div>
<svg class="i" style="left:211px;top:486px;width:5px;height:3px" viewBox="0 0 5 3" shape-rendering="crispEdges"><path d="M0 3h5L2.5 0z" fill="#000"/></svg>
<div class="a" style="left:222px;top:483px;width:11px;height:11px;background:#f0f0f0;border-right:2px solid #7a7a7a;border-bottom:2px solid #7a7a7a;border-top:1px solid #fff;border-left:1px solid #fff"></div>
<svg class="i" style="left:224px;top:485px;width:7px;height:6px" viewBox="0 0 7 6" shape-rendering="crispEdges"><path d="M0.8 0.8l5.4 4.4M6.2 0.8L0.8 5.2" stroke="#000" stroke-width="2" shape-rendering="auto"/></svg>
<div class="a" style="left:1px;top:496px;width:234px;height:1px;background:#a0a0a0;"></div>
<div class="a" style="left:1px;top:496px;width:1px;height:306px;background:#a0a0a0;"></div>
<div class="a" style="left:2px;top:497px;width:16px;height:304px;background:#f0f0f0;"></div>
<div class="a" style="left:17px;top:497px;width:1px;height:304px;background:#a0a0a0;"></div>
<div class="a" style="left:18px;top:497px;width:216px;height:304px;background:#fff;"></div>
<div class="a" style="left:234px;top:496px;width:1px;height:306px;background:#f0f0f0;"></div>
<div class="a" style="left:18px;top:497px;width:216px;height:19px;background:#f0f0f0;"></div>
<div class="a" style="left:5px;top:501px;width:9px;height:9px;border:1px solid #a0a0a0;background:#f4f4f4"></div><div class="a" style="left:7px;top:505px;width:5px;height:1px;background:#000;"></div>
<div class="t" style="left:22px;top:500.6px;font-size:12px;color:#000;font-weight:bold;letter-spacing:0.55px">Property</div>
<div class="a" style="left:18px;top:516px;width:216px;height:1px;background:#a0a0a0;"></div>
<div class="a" style="left:101px;top:517px;width:1px;height:20px;background:#a0a0a0;"></div>
<div class="t" style="left:22px;top:521.6px;font-size:12px;color:#000;letter-spacing:-0.1px">Name</div>
<div class="t" style="left:106.5px;top:521.6px;font-size:12px;color:#000;letter-spacing:-0.1px;word-spacing:1.5px">Timer1</div>
<div class="a" style="left:18px;top:537px;width:216px;height:1px;background:#a0a0a0;"></div>
<div class="a" style="left:101px;top:538px;width:1px;height:20px;background:#a0a0a0;"></div>
<div class="t" style="left:22px;top:542.6px;font-size:12px;color:#000;letter-spacing:-0.1px">Type</div>
<div class="t" style="left:106.5px;top:542.6px;font-size:12px;color:#000;letter-spacing:-0.1px;word-spacing:1.5px">15 - Timer</div>
<div class="a" style="left:18px;top:558px;width:216px;height:1px;background:#a0a0a0;"></div>
<div class="a" style="left:101px;top:559px;width:1px;height:20px;background:#a0a0a0;"></div>
<div class="t" style="left:22px;top:563.6px;font-size:12px;color:#000;letter-spacing:-0.1px">X</div>
<div class="t" style="left:106.5px;top:563.6px;font-size:12px;color:#000;letter-spacing:-0.1px;word-spacing:1.5px">360</div>
<div class="a" style="left:18px;top:579px;width:216px;height:1px;background:#a0a0a0;"></div>
<div class="a" style="left:101px;top:580px;width:1px;height:20px;background:#a0a0a0;"></div>
<div class="t" style="left:22px;top:584.6px;font-size:12px;color:#000;letter-spacing:-0.1px">Y</div>
<div class="t" style="left:106.5px;top:584.6px;font-size:12px;color:#000;letter-spacing:-0.1px;word-spacing:1.5px">70</div>
<div class="a" style="left:18px;top:600px;width:216px;height:1px;background:#a0a0a0;"></div>
<div class="a" style="left:101px;top:601px;width:1px;height:20px;background:#a0a0a0;"></div>
<div class="t" style="left:22px;top:605.6px;font-size:12px;color:#000;letter-spacing:-0.1px">Group</div>
<div class="t" style="left:106.5px;top:605.6px;font-size:12px;color:#000;letter-spacing:-0.1px;word-spacing:1.5px">0</div>
<div class="a" style="left:18px;top:621px;width:216px;height:1px;background:#a0a0a0;"></div>
<div class="a" style="left:101px;top:622px;width:1px;height:20px;background:#a0a0a0;"></div>
<div class="t" style="left:22px;top:626.6px;font-size:12px;color:#000;letter-spacing:-0.1px">Active</div>
<div class="t" style="left:106.5px;top:626.6px;font-size:12px;color:#000;letter-spacing:-0.1px;word-spacing:1.5px">1 - Enabled</div>
<div class="a" style="left:18px;top:642px;width:216px;height:1px;background:#a0a0a0;"></div>
<div class="a" style="left:18px;top:644px;width:216px;height:19px;background:#f0f0f0;"></div>
<div class="a" style="left:5px;top:648px;width:9px;height:9px;border:1px solid #a0a0a0;background:#f4f4f4"></div><div class="a" style="left:7px;top:652px;width:5px;height:1px;background:#000;"></div>
<div class="t" style="left:22px;top:647.6px;font-size:12px;color:#000;font-weight:bold;letter-spacing:0.55px">Misc.</div>
<div class="a" style="left:18px;top:663px;width:216px;height:1px;background:#a0a0a0;"></div>
<div class="a" style="left:101px;top:664px;width:1px;height:20px;background:#a0a0a0;"></div>
<div class="t" style="left:22px;top:668.6px;font-size:12px;color:#000;letter-spacing:-0.1px">Interval</div>
<div class="t" style="left:106.5px;top:668.6px;font-size:12px;color:#000;letter-spacing:-0.1px;word-spacing:1.5px">1000</div>
<div class="a" style="left:18px;top:684px;width:216px;height:1px;background:#a0a0a0;"></div>
<div class="a" style="left:2px;top:801px;width:233px;height:1px;background:#a0a0a0;"></div>
<div class="a" style="left:1px;top:802px;width:1px;height:48px;background:#a0a0a0;"></div>
<div class="a" style="left:0px;top:850px;width:246px;height:1px;background:#a0a0a0;"></div>
<div class="a" style="left:234px;top:802px;width:1px;height:48px;background:#fff;"></div>
<div class="a" style="left:244px;top:102px;width:1px;height:748px;background:#a0a0a0;"></div>
<div class="a" style="left:245px;top:102px;width:1px;height:749px;background:#696969;"></div>
<div class="a" style="left:246px;top:102px;width:1014px;height:748px;background:#ababab;"></div>
<div class="a" style="left:245px;top:101px;width:1016px;height:1px;background:#8a8a8a;"></div>
<div class="a" style="left:245px;top:102px;width:1016px;height:1px;background:#5a5a5a;"></div>
<div class="a" style="left:1260px;top:102px;width:1px;height:748px;background:#f0f0f0;"></div>
<div class="a" style="left:246px;top:103px;width:680px;height:576px;border:1px solid #3a3d42;border-radius:6px 6px 0 0;background:linear-gradient(#bccbdc 0px,#c6d4e4 12px,#d4e1ef 26px,#d7e3f1 30px,#d7e3f1 100%);box-shadow:inset 1px 1px 0 rgba(255,255,255,.55),inset -1px 0 0 rgba(255,255,255,.6)"></div>
<svg class="i" style="left:256px;top:113px;width:16px;height:16px;" viewBox="0 0 16 16" shape-rendering="crispEdges"><rect x="4.8" y="1.3" width="6.4" height="3" rx="1.2" fill="#fff" stroke="#000" stroke-width="1.5"/><rect x="1.2" y="3.6" width="13.6" height="11.2" rx="2.2" fill="#c8c8c8" stroke="#000" stroke-width="1.45"/><rect x="3.3" y="6" width="9.2" height="6.4" fill="#eee" stroke="#000" stroke-width="1.1"/><path d="M4 7h1M6 7h1M8 7h1M10 7h1M5 8h1M7 8h1M9 8h1M11 8h1M4 9h1M6 9h1M8 9h1M10 9h1M5 10h1M7 10h1M9 10h1M11 10h1M4 11h1M6 11h1M8 11h1M10 11h1" stroke="#bbb" stroke-width="1" shape-rendering="crispEdges"/><path d="M3 4.6h9" stroke="#999" stroke-width=".8"/><path d="M13.2 3v3.2M11.6 4.6h3.2" stroke="#f00" stroke-width="1.3"/><rect x="12.7" y="6.2" width="1" height="1" fill="#ff0"/><rect x="12.7" y="7.2" width="1" height="1.2" fill="#0c0"/></svg>
<div class="t" style="left:276px;top:116.2px;font-size:12.3px;color:#1e1e1e;letter-spacing:-0.25px;color:#3a3a3a">Layout - Panel1</div>
<div class="a" style="left:819px;top:113px;width:31px;height:17px;border:1px solid #8c9ab4;border-radius:3px;background:linear-gradient(#c9d6e5,#d5e0ec 50%,#dfe8f2);box-shadow:inset 0 0 0 1px rgba(255,255,255,.45)"></div>
<div class="a" style="left:829px;top:122px;width:11px;height:4px;background:#fafafa;border:1px solid #444;border-radius:1px"></div>
<div class="a" style="left:852px;top:113px;width:31px;height:17px;border:1px solid #8c9ab4;border-radius:3px;background:linear-gradient(#c9d6e5,#d5e0ec 50%,#dfe8f2);box-shadow:inset 0 0 0 1px rgba(255,255,255,.45)"></div>
<div class="a" style="left:862px;top:117px;width:11px;height:9px;background:#f4f4f4;border:1px solid #444;border-radius:1px"></div>
<div class="a" style="left:865px;top:120px;width:5px;height:3px;background:#aab8c8;border:1px solid #444"></div>
<div class="a" style="left:885px;top:113px;width:31px;height:17px;border:1px solid #8c9ab4;border-radius:3px;background:linear-gradient(#c9d6e5,#d5e0ec 50%,#dfe8f2);box-shadow:inset 0 0 0 1px rgba(255,255,255,.45)"></div>
<svg class="i" style="left:894px;top:117px;width:13px;height:10px;" viewBox="0 0 13 10" shape-rendering="auto"><path d="M2.2 1.6l8.6 6.8M10.8 1.6l-8.6 6.8" stroke="#3c3c3c" stroke-width="3.6" stroke-linecap="round"/><path d="M2.2 1.6l8.6 6.8M10.8 1.6l-8.6 6.8" stroke="#fafafa" stroke-width="1.7" stroke-linecap="round"/></svg>
<div class="a" style="left:254px;top:133px;width:664px;height:536px;background:#f0f0f0;"></div>
<div class="a" style="left:254px;top:133px;width:38px;height:1px;background:#a0a0a0;"></div>
<div class="a" style="left:257px;top:137px;width:2px;height:22px;background:repeating-linear-gradient(180deg,#bdbdbd 0 1px,#d4d4d4 1px 2px,transparent 2px 4px);"></div>
<div class="a" style="left:261px;top:137px;width:2px;height:22px;background:repeating-linear-gradient(180deg,#c8c8c8 0 2px,transparent 2px 4px);"></div>
<svg class="i" style="left:268px;top:140px;width:16px;height:16px;" viewBox="0 0 16 16" shape-rendering="crispEdges"><path d="M1.5 0.5h8l3 3v12h-11z" fill="#fff" stroke="#000"/><path d="M9.5 0.5v3h3" fill="none" stroke="#000"/><path d="M3 5h6" stroke="#080" stroke-width="1"/><path d="M3 7h8M3 9h8M3 11h8M3 13h8" stroke="#666"/></svg>
<div class="a" style="left:254px;top:161px;width:663px;height:3px;background:linear-gradient(#dcdcdc,#9a9a9a 50%,#7a7a7a);"></div>
<div class="a" style="left:916px;top:133px;width:2px;height:536px;background:#fff;"></div>
<div class="a" style="left:254px;top:668px;width:664px;height:2px;background:#fff;"></div>
<div class="a" style="left:254px;top:163px;width:2px;height:505px;background:linear-gradient(90deg,#9a9a9a,#d8d8d8);"></div>
<div class="a" style="left:256px;top:164px;width:660px;height:1px;background:#000;"></div>
<div class="a" style="left:256px;top:164px;width:1px;height:505px;background:#000;"></div>
<div class="a" style="left:257px;top:165px;width:16px;height:16px;background:#c0c0c0;"></div>
<div class="a" style="left:273px;top:165px;width:1px;height:504px;background:#000;"></div>
<div class="a" style="left:274px;top:165px;width:640px;height:16px;background:#c0c0c0;"></div>
<div class="a" style="left:914px;top:165px;width:2px;height:16px;background:#c0c0c0;"></div>
<div class="a" style="left:257px;top:181px;width:659px;height:1px;background:#000;"></div>
<div class="a" style="left:913px;top:165px;width:1px;height:17px;background:#000;"></div>
<div class="a" style="left:273px;top:165px;width:1px;height:16px;background:#000;"></div>
<div class="t" style="left:276px;top:166.6px;font-size:10px;color:#000;letter-spacing:0px">0</div>
<div class="a" style="left:283px;top:179px;width:1px;height:2px;background:#000;"></div>
<div class="a" style="left:293px;top:177px;width:1px;height:4px;background:#000;"></div>
<div class="a" style="left:303px;top:179px;width:1px;height:2px;background:#000;"></div>
<div class="a" style="left:313px;top:174px;width:1px;height:7px;background:#000;"></div>
<div class="t" style="left:316px;top:166.6px;font-size:10px;color:#000;letter-spacing:0px">40</div>
<div class="a" style="left:323px;top:179px;width:1px;height:2px;background:#000;"></div>
<div class="a" style="left:333px;top:177px;width:1px;height:4px;background:#000;"></div>
<div class="a" style="left:343px;top:179px;width:1px;height:2px;background:#000;"></div>
<div class="a" style="left:353px;top:165px;width:1px;height:16px;background:#000;"></div>
<div class="t" style="left:356px;top:166.6px;font-size:10px;color:#000;letter-spacing:0px">80</div>
<div class="a" style="left:363px;top:179px;width:1px;height:2px;background:#000;"></div>
<div class="a" style="left:373px;top:177px;width:1px;height:4px;background:#000;"></div>
<div class="a" style="left:383px;top:179px;width:1px;height:2px;background:#000;"></div>
<div class="a" style="left:393px;top:174px;width:1px;height:7px;background:#000;"></div>
<div class="t" style="left:396px;top:166.6px;font-size:10px;color:#000;letter-spacing:0px">120</div>
<div class="a" style="left:403px;top:179px;width:1px;height:2px;background:#000;"></div>
<div class="a" style="left:413px;top:177px;width:1px;height:4px;background:#000;"></div>
<div class="a" style="left:423px;top:179px;width:1px;height:2px;background:#000;"></div>
<div class="a" style="left:433px;top:165px;width:1px;height:16px;background:#000;"></div>
<div class="t" style="left:436px;top:166.6px;font-size:10px;color:#000;letter-spacing:0px">160</div>
<div class="a" style="left:443px;top:179px;width:1px;height:2px;background:#000;"></div>
<div class="a" style="left:453px;top:177px;width:1px;height:4px;background:#000;"></div>
<div class="a" style="left:463px;top:179px;width:1px;height:2px;background:#000;"></div>
<div class="a" style="left:473px;top:174px;width:1px;height:7px;background:#000;"></div>
<div class="t" style="left:476px;top:166.6px;font-size:10px;color:#000;letter-spacing:0px">200</div>
<div class="a" style="left:483px;top:179px;width:1px;height:2px;background:#000;"></div>
<div class="a" style="left:493px;top:177px;width:1px;height:4px;background:#000;"></div>
<div class="a" style="left:503px;top:179px;width:1px;height:2px;background:#000;"></div>
<div class="a" style="left:513px;top:165px;width:1px;height:16px;background:#000;"></div>
<div class="t" style="left:516px;top:166.6px;font-size:10px;color:#000;letter-spacing:0px">240</div>
<div class="a" style="left:523px;top:179px;width:1px;height:2px;background:#000;"></div>
<div class="a" style="left:533px;top:177px;width:1px;height:4px;background:#000;"></div>
<div class="a" style="left:543px;top:179px;width:1px;height:2px;background:#000;"></div>
<div class="a" style="left:553px;top:174px;width:1px;height:7px;background:#000;"></div>
<div class="t" style="left:556px;top:166.6px;font-size:10px;color:#000;letter-spacing:0px">280</div>
<div class="a" style="left:563px;top:179px;width:1px;height:2px;background:#000;"></div>
<div class="a" style="left:573px;top:177px;width:1px;height:4px;background:#000;"></div>
<div class="a" style="left:583px;top:179px;width:1px;height:2px;background:#000;"></div>
<div class="a" style="left:593px;top:165px;width:1px;height:16px;background:#000;"></div>
<div class="t" style="left:596px;top:166.6px;font-size:10px;color:#000;letter-spacing:0px">320</div>
<div class="a" style="left:603px;top:179px;width:1px;height:2px;background:#000;"></div>
<div class="a" style="left:613px;top:177px;width:1px;height:4px;background:#000;"></div>
<div class="a" style="left:623px;top:179px;width:1px;height:2px;background:#000;"></div>
<div class="a" style="left:633px;top:174px;width:1px;height:7px;background:#000;"></div>
<div class="t" style="left:636px;top:166.6px;font-size:10px;color:#000;letter-spacing:0px">360</div>
<div class="a" style="left:643px;top:179px;width:1px;height:2px;background:#000;"></div>
<div class="a" style="left:653px;top:177px;width:1px;height:4px;background:#000;"></div>
<div class="a" style="left:663px;top:179px;width:1px;height:2px;background:#000;"></div>
<div class="a" style="left:673px;top:165px;width:1px;height:16px;background:#000;"></div>
<div class="t" style="left:676px;top:166.6px;font-size:10px;color:#000;letter-spacing:0px">400</div>
<div class="a" style="left:683px;top:179px;width:1px;height:2px;background:#000;"></div>
<div class="a" style="left:693px;top:177px;width:1px;height:4px;background:#000;"></div>
<div class="a" style="left:703px;top:179px;width:1px;height:2px;background:#000;"></div>
<div class="a" style="left:713px;top:174px;width:1px;height:7px;background:#000;"></div>
<div class="t" style="left:716px;top:166.6px;font-size:10px;color:#000;letter-spacing:0px">440</div>
<div class="a" style="left:723px;top:179px;width:1px;height:2px;background:#000;"></div>
<div class="a" style="left:733px;top:177px;width:1px;height:4px;background:#000;"></div>
<div class="a" style="left:743px;top:179px;width:1px;height:2px;background:#000;"></div>
<div class="a" style="left:753px;top:165px;width:1px;height:16px;background:#000;"></div>
<div class="t" style="left:756px;top:166.6px;font-size:10px;color:#000;letter-spacing:0px">480</div>
<div class="a" style="left:763px;top:179px;width:1px;height:2px;background:#000;"></div>
<div class="a" style="left:773px;top:177px;width:1px;height:4px;background:#000;"></div>
<div class="a" style="left:783px;top:179px;width:1px;height:2px;background:#000;"></div>
<div class="a" style="left:793px;top:174px;width:1px;height:7px;background:#000;"></div>
<div class="t" style="left:796px;top:166.6px;font-size:10px;color:#000;letter-spacing:0px">520</div>
<div class="a" style="left:803px;top:179px;width:1px;height:2px;background:#000;"></div>
<div class="a" style="left:813px;top:177px;width:1px;height:4px;background:#000;"></div>
<div class="a" style="left:823px;top:179px;width:1px;height:2px;background:#000;"></div>
<div class="a" style="left:833px;top:165px;width:1px;height:16px;background:#000;"></div>
<div class="t" style="left:836px;top:166.6px;font-size:10px;color:#000;letter-spacing:0px">560</div>
<div class="a" style="left:843px;top:179px;width:1px;height:2px;background:#000;"></div>
<div class="a" style="left:853px;top:177px;width:1px;height:4px;background:#000;"></div>
<div class="a" style="left:863px;top:179px;width:1px;height:2px;background:#000;"></div>
<div class="a" style="left:873px;top:174px;width:1px;height:7px;background:#000;"></div>
<div class="t" style="left:876px;top:166.6px;font-size:10px;color:#000;letter-spacing:0px">600</div>
<div class="a" style="left:883px;top:179px;width:1px;height:2px;background:#000;"></div>
<div class="a" style="left:893px;top:177px;width:1px;height:4px;background:#000;"></div>
<div class="a" style="left:903px;top:179px;width:1px;height:2px;background:#000;"></div>
<div class="a" style="left:913px;top:165px;width:1px;height:16px;background:#000;"></div>
<div class="a" style="left:518px;top:165px;width:1px;height:16px;background:#000;"></div>
<div class="a" style="left:257px;top:182px;width:16px;height:487px;background:#c0c0c0;"></div>
<div class="a" style="left:266px;top:191px;width:7px;height:1px;background:#000;"></div>
<div class="t" style="left:257.5px;top:194.5px;font-size:10px;color:#000;writing-mode:vertical-rl;transform:rotate(180deg)">-40</div>
<div class="a" style="left:271px;top:201px;width:2px;height:1px;background:#000;"></div>
<div class="a" style="left:269px;top:211px;width:4px;height:1px;background:#000;"></div>
<div class="a" style="left:271px;top:221px;width:2px;height:1px;background:#000;"></div>
<div class="a" style="left:257px;top:231px;width:16px;height:1px;background:#000;"></div>
<div class="t" style="left:257.5px;top:234.5px;font-size:10px;color:#000;writing-mode:vertical-rl;transform:rotate(180deg)">0</div>
<div class="a" style="left:271px;top:241px;width:2px;height:1px;background:#000;"></div>
<div class="a" style="left:269px;top:251px;width:4px;height:1px;background:#000;"></div>
<div class="a" style="left:271px;top:261px;width:2px;height:1px;background:#000;"></div>
<div class="a" style="left:266px;top:271px;width:7px;height:1px;background:#000;"></div>
<div class="t" style="left:257.5px;top:274.5px;font-size:10px;color:#000;writing-mode:vertical-rl;transform:rotate(180deg)">40</div>
<div class="a" style="left:271px;top:281px;width:2px;height:1px;background:#000;"></div>
<div class="a" style="left:269px;top:291px;width:4px;height:1px;background:#000;"></div>
<div class="a" style="left:271px;top:301px;width:2px;height:1px;background:#000;"></div>
<div class="a" style="left:257px;top:311px;width:16px;height:1px;background:#000;"></div>
<div class="t" style="left:257.5px;top:314.5px;font-size:10px;color:#000;writing-mode:vertical-rl;transform:rotate(180deg)">80</div>
<div class="a" style="left:271px;top:321px;width:2px;height:1px;background:#000;"></div>
<div class="a" style="left:269px;top:331px;width:4px;height:1px;background:#000;"></div>
<div class="a" style="left:271px;top:341px;width:2px;height:1px;background:#000;"></div>
<div class="a" style="left:266px;top:351px;width:7px;height:1px;background:#000;"></div>
<div class="t" style="left:257.5px;top:354.5px;font-size:10px;color:#000;writing-mode:vertical-rl;transform:rotate(180deg)">120</div>
<div class="a" style="left:271px;top:361px;width:2px;height:1px;background:#000;"></div>
<div class="a" style="left:269px;top:371px;width:4px;height:1px;background:#000;"></div>
<div class="a" style="left:271px;top:381px;width:2px;height:1px;background:#000;"></div>
<div class="a" style="left:257px;top:391px;width:16px;height:1px;background:#000;"></div>
<div class="t" style="left:257.5px;top:394.5px;font-size:10px;color:#000;writing-mode:vertical-rl;transform:rotate(180deg)">160</div>
<div class="a" style="left:271px;top:401px;width:2px;height:1px;background:#000;"></div>
<div class="a" style="left:269px;top:411px;width:4px;height:1px;background:#000;"></div>
<div class="a" style="left:271px;top:421px;width:2px;height:1px;background:#000;"></div>
<div class="a" style="left:266px;top:431px;width:7px;height:1px;background:#000;"></div>
<div class="t" style="left:257.5px;top:434.5px;font-size:10px;color:#000;writing-mode:vertical-rl;transform:rotate(180deg)">200</div>
<div class="a" style="left:271px;top:441px;width:2px;height:1px;background:#000;"></div>
<div class="a" style="left:269px;top:451px;width:4px;height:1px;background:#000;"></div>
<div class="a" style="left:271px;top:461px;width:2px;height:1px;background:#000;"></div>
<div class="a" style="left:257px;top:471px;width:16px;height:1px;background:#000;"></div>
<div class="t" style="left:257.5px;top:474.5px;font-size:10px;color:#000;writing-mode:vertical-rl;transform:rotate(180deg)">240</div>
<div class="a" style="left:271px;top:481px;width:2px;height:1px;background:#000;"></div>
<div class="a" style="left:269px;top:491px;width:4px;height:1px;background:#000;"></div>
<div class="a" style="left:271px;top:501px;width:2px;height:1px;background:#000;"></div>
<div class="a" style="left:266px;top:511px;width:7px;height:1px;background:#000;"></div>
<div class="t" style="left:257.5px;top:514.5px;font-size:10px;color:#000;writing-mode:vertical-rl;transform:rotate(180deg)">280</div>
<div class="a" style="left:271px;top:521px;width:2px;height:1px;background:#000;"></div>
<div class="a" style="left:269px;top:531px;width:4px;height:1px;background:#000;"></div>
<div class="a" style="left:271px;top:541px;width:2px;height:1px;background:#000;"></div>
<div class="a" style="left:257px;top:551px;width:16px;height:1px;background:#000;"></div>
<div class="t" style="left:257.5px;top:554.5px;font-size:10px;color:#000;writing-mode:vertical-rl;transform:rotate(180deg)">320</div>
<div class="a" style="left:271px;top:561px;width:2px;height:1px;background:#000;"></div>
<div class="a" style="left:269px;top:571px;width:4px;height:1px;background:#000;"></div>
<div class="a" style="left:271px;top:581px;width:2px;height:1px;background:#000;"></div>
<div class="a" style="left:266px;top:591px;width:7px;height:1px;background:#000;"></div>
<div class="t" style="left:257.5px;top:594.5px;font-size:10px;color:#000;writing-mode:vertical-rl;transform:rotate(180deg)">360</div>
<div class="a" style="left:271px;top:601px;width:2px;height:1px;background:#000;"></div>
<div class="a" style="left:269px;top:611px;width:4px;height:1px;background:#000;"></div>
<div class="a" style="left:271px;top:621px;width:2px;height:1px;background:#000;"></div>
<div class="a" style="left:257px;top:631px;width:16px;height:1px;background:#000;"></div>
<div class="t" style="left:257.5px;top:634.5px;font-size:10px;color:#000;writing-mode:vertical-rl;transform:rotate(180deg)">400</div>
<div class="a" style="left:271px;top:641px;width:2px;height:1px;background:#000;"></div>
<div class="a" style="left:269px;top:651px;width:4px;height:1px;background:#000;"></div>
<div class="a" style="left:271px;top:661px;width:2px;height:1px;background:#000;"></div>
<div class="a" style="left:257px;top:237px;width:16px;height:1px;background:#fff;"></div>
<div class="a" style="left:274px;top:182px;width:639px;height:50px;background:#5f5f5f;"></div>
<div class="a" style="left:274px;top:232px;width:639px;height:365px;background:#3a4b70;"></div>
<div class="a" style="left:274px;top:597px;width:639px;height:72px;background:#5f5f5f;"></div>
<div class="a" style="left:913px;top:182px;width:3px;height:487px;background:#858585;"></div>
<div class="a" style="left:283px;top:231px;width:630px;height:366px;background:radial-gradient(circle at 0.5px 0.5px,#dccb98 0.5px,transparent 0.5px) 0 0/10px 10px;"></div>
<svg class="i" style="left:286px;top:195px;width:20px;height:23px;" viewBox="0 0 20 23" shape-rendering="auto"><path d="M1.2 6.5L3.8 12.5M5.2 3L7.2 10.5M9.8 1.6V10.5M14.4 4L12.2 11M19 11.8L14 16.5" stroke="#f5cd55" stroke-width="2.5" stroke-linecap="round"/><path d="M3 11.5Q4 9 8 9L13.5 9.5Q15.5 12 14.8 16L13.5 20.5Q12 22.2 9 22.2Q6 22 5 19Q3.5 15 3 11.5z" fill="#f5cd55"/><path d="M5 20Q9 23 13 20" stroke="#d9a93a" stroke-width="1" fill="none"/></svg>
<div class="t" style="left:287px;top:217.2px;font-size:7.5px;color:#fff;font-weight:bold;letter-spacing:-0.3px">MAN</div>
<svg class="i" style="left:321px;top:196px;width:14px;height:20px;" viewBox="0 0 14 20" shape-rendering="auto"><ellipse cx="7" cy="7" rx="6.5" ry="6.5" fill="#f3f0c8"/><path d="M3 11c1 2 2 3 2 5h4c0-2 1-3 2-5z" fill="#f3f0c8"/><rect x="4.5" y="16" width="5" height="3" fill="#b8b060"/><ellipse cx="5" cy="5" rx="2" ry="3" fill="#fff" opacity=".6"/></svg>
<div class="t" style="left:322px;top:217.2px;font-size:7.5px;color:#fff;font-weight:bold;letter-spacing:0.4px">I/O</div>
<div class="a" style="left:354px;top:205px;width:14px;height:13px;background:#b4b4b4;box-shadow:1px 1px 1px rgba(0,0,0,.5)"></div>
<svg class="i" style="left:389px;top:199px;width:15px;height:23px;" viewBox="0 0 15 23" shape-rendering="auto"><ellipse cx="7.5" cy="7.5" rx="7" ry="7.5" fill="#f3f0c8"/><path d="M3 12c1 2 2 3 2 6h5c0-3 1-4 2-6z" fill="#f3f0c8"/><rect x="5" y="18" width="5" height="4" fill="#b8b060"/></svg>
<svg class="i" style="left:421px;top:196px;width:20px;height:26px;" viewBox="0 0 20 26" shape-rendering="auto"><path d="M3.8 22L13 7.5" stroke="#e2e2e2" stroke-width="2.1"/><circle cx="3.2" cy="22.6" r="1.9" fill="none" stroke="#e2e2e2" stroke-width="1.5"/><path d="M11.2 8.2Q10.6 3.6 13.8 1.6L14.4 4.4L16.6 5.4L18.6 3.6Q18.9 8 14.6 9.4z" fill="#e2e2e2"/></svg>
<div class="a" style="left:451.0px;top:198.0px;width:9px;height:9px;border-radius:50%;background:#404040"></div>
<div class="t" style="left:462.5px;top:197.5px;font-size:9.5px;color:#fff;letter-spacing:-0.4px">EMG</div>
<div class="a" style="left:451.0px;top:214.5px;width:9px;height:9px;border-radius:50%;background:#404040"></div>
<div class="t" style="left:462.5px;top:214px;font-size:9.5px;color:#fff;letter-spacing:-0.9px">AUTO EN</div>
<div class="a" style="left:505.0px;top:198.0px;width:9px;height:9px;border-radius:50%;background:#404040"></div>
<div class="t" style="left:516.5px;top:197.5px;font-size:9.5px;color:#fff;letter-spacing:-0.4px">PRTCT</div>
<div class="a" style="left:505.0px;top:214.5px;width:9px;height:9px;border-radius:50%;background:#404040"></div>
<div class="t" style="left:516.5px;top:214px;font-size:9.5px;color:#fff;letter-spacing:-0.4px">D SW</div>
<div class="a" style="left:559px;top:192px;width:115px;height:35px;border:1px solid #0b3c72;border-radius:3px;background:linear-gradient(#fbfbfb,#e6e5e7 50%,#c9c7ca);box-shadow:inset 0 0 0 1px rgba(255,255,255,.7)"></div>
<div class="a" style="left:680px;top:192px;width:115px;height:35px;border:1px solid #0b3c72;border-radius:3px;background:linear-gradient(#fbfbfb,#e6e5e7 50%,#c9c7ca);box-shadow:inset 0 0 0 1px rgba(255,255,255,.7)"></div>
<div class="t" style="left:725px;top:203.4px;font-size:12.3px;color:#000;letter-spacing:2px;transform:scaleX(.8);transform-origin:0 0">W 0 T 0</div>
<div class="t" style="left:843px;top:200px;font-size:14px;color:#fff;transform:scaleX(.7);transform-origin:0 0">1</div>
<div class="t" style="left:855px;top:200px;font-size:14px;color:#fff;transform:scaleX(.65);transform-origin:0 0">%</div>
<div class="a" style="left:802px;top:216px;width:104px;height:8px;background:#e9e7ec;"></div>
<div class="a" style="left:803px;top:217px;width:1px;height:6px;background:#3a7bd5;"></div>
<svg class="a" style="left:363px;top:301px;width:140px;height:140px" viewBox="0 0 140 140" shape-rendering="crispEdges"><circle cx="70" cy="70" r="70" fill="#00ff00"/></svg>
<div class="t" style="left:416.3px;top:362.8px;font-size:22px;color:#000;transform:scaleX(.8);transform-origin:0 0;letter-spacing:0px">PL1</div>
<div class="a" style="left:633px;top:301px;width:130px;height:130px;background:#000;"></div>
<div class="a" style="left:637px;top:305px;width:118px;height:4px;background:#fff;"></div>
<div class="a" style="left:637px;top:305px;width:4px;height:118px;background:#fff;"></div>
<div class="a" style="left:751px;top:309px;width:8px;height:118px;background:#808080;"></div>
<div class="a" style="left:641px;top:419px;width:118px;height:8px;background:#808080;"></div>
<div class="a" style="left:641px;top:309px;width:110px;height:110px;background:#c0c0c0;"></div>
<svg class="a" style="left:649px;top:317px;width:94px;height:94px" viewBox="0 0 23 23" preserveAspectRatio="none" shape-rendering="crispEdges"><g fill="#fff"><rect x="9" y="1" width="5" height="1"/><rect x="6" y="2" width="11" height="1"/><rect x="5" y="3" width="13" height="1"/><rect x="4" y="4" width="15" height="1"/><rect x="3" y="5" width="17" height="1"/><rect x="2" y="6" width="19" height="1"/><rect x="2" y="7" width="19" height="1"/><rect x="2" y="8" width="19" height="1"/><rect x="1" y="9" width="21" height="1"/><rect x="1" y="10" width="21" height="1"/><rect x="1" y="11" width="21" height="1"/><rect x="1" y="12" width="21" height="1"/><rect x="1" y="13" width="21" height="1"/><rect x="2" y="14" width="19" height="1"/><rect x="2" y="15" width="19" height="1"/><rect x="2" y="16" width="19" height="1"/><rect x="3" y="17" width="17" height="1"/><rect x="4" y="18" width="15" height="1"/><rect x="5" y="19" width="13" height="1"/><rect x="6" y="20" width="11" height="1"/><rect x="9" y="21" width="5" height="1"/></g><g fill="#000"><rect x="9" y="0" width="5" height="1"/><rect x="6" y="1" width="3" height="1"/><rect x="14" y="1" width="3" height="1"/><rect x="5" y="2" width="1" height="1"/><rect x="17" y="2" width="1" height="1"/><rect x="3" y="3" width="2" height="1"/><rect x="18" y="3" width="2" height="1"/><rect x="3" y="4" width="1" height="1"/><rect x="19" y="4" width="1" height="1"/><rect x="2" y="5" width="1" height="1"/><rect x="20" y="5" width="1" height="1"/><rect x="1" y="6" width="1" height="1"/><rect x="21" y="6" width="1" height="1"/><rect x="1" y="7" width="1" height="1"/><rect x="21" y="7" width="1" height="1"/><rect x="1" y="8" width="1" height="1"/><rect x="21" y="8" width="1" height="1"/><rect x="0" y="9" width="1" height="1"/><rect x="22" y="9" width="1" height="1"/><rect x="0" y="10" width="1" height="1"/><rect x="22" y="10" width="1" height="1"/><rect x="0" y="11" width="1" height="1"/><rect x="22" y="11" width="1" height="1"/><rect x="0" y="12" width="1" height="1"/><rect x="22" y="12" width="1" height="1"/><rect x="0" y="13" width="1" height="1"/><rect x="22" y="13" width="1" height="1"/><rect x="1" y="14" width="1" height="1"/><rect x="21" y="14" width="1" height="1"/><rect x="1" y="15" width="1" height="1"/><rect x="21" y="15" width="1" height="1"/><rect x="1" y="16" width="1" height="1"/><rect x="21" y="16" width="1" height="1"/><rect x="2" y="17" width="1" height="1"/><rect x="20" y="17" width="1" height="1"/><rect x="3" y="18" width="1" height="1"/><rect x="19" y="18" width="1" height="1"/><rect x="3" y="19" width="2" height="1"/><rect x="18" y="19" width="2" height="1"/><rect x="5" y="20" width="1" height="1"/><rect x="17" y="20" width="1" height="1"/><rect x="6" y="21" width="3" height="1"/><rect x="14" y="21" width="3" height="1"/><rect x="9" y="22" width="5" height="1"/><rect x="11" y="2" width="1" height="1"/><rect x="3" y="7" width="1" height="1"/><rect x="19" y="7" width="1" height="1"/><rect x="2" y="11" width="1" height="1"/><rect x="20" y="11" width="1" height="1"/><rect x="3" y="15" width="1" height="1"/><rect x="19" y="15" width="1" height="1"/><rect x="6" y="18" width="1" height="1"/><rect x="16" y="18" width="1" height="1"/><rect x="11" y="20" width="1" height="1"/><rect x="6" y="6" width="1" height="1"/><rect x="7" y="7" width="1" height="1"/><rect x="8" y="8" width="1" height="1"/><rect x="9" y="9" width="1" height="1"/><rect x="10" y="10" width="1" height="1"/><rect x="11" y="11" width="1" height="1"/><rect x="17" y="5" width="1" height="1"/><rect x="16" y="6" width="1" height="1"/><rect x="15" y="7" width="1" height="1"/><rect x="14" y="8" width="1" height="1"/><rect x="13" y="9" width="1" height="1"/><rect x="12" y="10" width="1" height="1"/></g></svg>
<div class="a" style="left:630.0px;top:298.0px;width:7px;height:7px;background:#000;border:1px solid #fff"></div>
<div class="a" style="left:630.0px;top:363.0px;width:7px;height:7px;background:#000;border:1px solid #fff"></div>
<div class="a" style="left:630.0px;top:428.0px;width:7px;height:7px;background:#000;border:1px solid #fff"></div>
<div class="a" style="left:695.0px;top:298.0px;width:7px;height:7px;background:#000;border:1px solid #fff"></div>
<div class="a" style="left:695.0px;top:428.0px;width:7px;height:7px;background:#000;border:1px solid #fff"></div>
<div class="a" style="left:760.0px;top:298.0px;width:7px;height:7px;background:#000;border:1px solid #fff"></div>
<div class="a" style="left:760.0px;top:363.0px;width:7px;height:7px;background:#000;border:1px solid #fff"></div>
<div class="a" style="left:760.0px;top:428.0px;width:7px;height:7px;background:#000;border:1px solid #fff"></div>
<div class="a" style="left:276px;top:628px;width:120px;height:36px;border:1px solid #0b3c72;border-radius:3px;background:linear-gradient(#fbfbfb,#e6e5e7 50%,#c9c7ca);box-shadow:inset 0 0 0 1px rgba(255,255,255,.7)"></div>
<div class="t" style="left:299px;top:647px;font-size:13px;color:#000;letter-spacing:1px">SI</div>
<div class="a" style="left:310px;top:492px;width:670px;height:284px;border:1px solid #3a3d42;border-radius:6px 6px 0 0;background:linear-gradient(#bccbdc 0px,#c6d4e4 12px,#d4e1ef 26px,#d7e3f1 30px,#d7e3f1 100%);box-shadow:inset 1px 1px 0 rgba(255,255,255,.55),inset -1px 0 0 rgba(255,255,255,.6)"></div>
<svg class="i" style="left:321px;top:502px;width:16px;height:16px;" viewBox="0 0 16 16" shape-rendering="crispEdges"><path d="M1.5 0.5h9l2 2v13h-11z" fill="#fff" stroke="#333"/><path d="M3 4h6" stroke="#0a0" stroke-width="1.2"/><path d="M3 7h8M3 9h8" stroke="#555"/></svg>
<div class="t" style="left:340px;top:505.2px;font-size:12.3px;color:#3a3a3a;letter-spacing:-0.25px">Source - Panel1</div>
<div class="a" style="left:873px;top:502px;width:31px;height:17px;border:1px solid #8c9ab4;border-radius:3px;background:linear-gradient(#c9d6e5,#d5e0ec 50%,#dfe8f2);box-shadow:inset 0 0 0 1px rgba(255,255,255,.45)"></div>
<div class="a" style="left:883px;top:511px;width:11px;height:4px;background:#fafafa;border:1px solid #444;border-radius:1px"></div>
<div class="a" style="left:906px;top:502px;width:31px;height:17px;border:1px solid #8c9ab4;border-radius:3px;background:linear-gradient(#c9d6e5,#d5e0ec 50%,#dfe8f2);box-shadow:inset 0 0 0 1px rgba(255,255,255,.45)"></div>
<div class="a" style="left:916px;top:506px;width:11px;height:9px;background:#f4f4f4;border:1px solid #444;border-radius:1px"></div>
<div class="a" style="left:919px;top:509px;width:5px;height:3px;background:#aab8c8;border:1px solid #444"></div>
<div class="a" style="left:939px;top:502px;width:31px;height:17px;border:1px solid #8c9ab4;border-radius:3px;background:linear-gradient(#c9d6e5,#d5e0ec 50%,#dfe8f2);box-shadow:inset 0 0 0 1px rgba(255,255,255,.45)"></div>
<svg class="i" style="left:948px;top:506px;width:13px;height:10px;" viewBox="0 0 13 10" shape-rendering="auto"><path d="M2.2 1.6l8.6 6.8M10.8 1.6l-8.6 6.8" stroke="#3c3c3c" stroke-width="3.6" stroke-linecap="round"/><path d="M2.2 1.6l8.6 6.8M10.8 1.6l-8.6 6.8" stroke="#fafafa" stroke-width="1.7" stroke-linecap="round"/></svg>
<div class="a" style="left:318px;top:522px;width:654px;height:246px;background:#f0f0f0;"></div>
<div class="a" style="left:318px;top:522px;width:654px;height:1px;background:#a0a0a0;"></div>
<div class="a" style="left:321px;top:527px;width:2px;height:22px;background:repeating-linear-gradient(180deg,#bdbdbd 0 1px,#d4d4d4 1px 2px,transparent 2px 4px);"></div>
<div class="a" style="left:325px;top:527px;width:2px;height:22px;background:repeating-linear-gradient(180deg,#c8c8c8 0 2px,transparent 2px 4px);"></div>
<svg class="i" style="left:330px;top:529px;width:16px;height:16px;" viewBox="0 0 16 16" shape-rendering="crispEdges"><rect x="4.8" y="1.3" width="6.4" height="3" rx="1.2" fill="#fff" stroke="#000" stroke-width="1.5"/><rect x="1.2" y="3.6" width="13.6" height="11.2" rx="2.2" fill="#c8c8c8" stroke="#000" stroke-width="1.45"/><rect x="3.3" y="6" width="9.2" height="6.4" fill="#eee" stroke="#000" stroke-width="1.1"/><path d="M4 7h1M6 7h1M8 7h1M10 7h1M5 8h1M7 8h1M9 8h1M11 8h1M4 9h1M6 9h1M8 9h1M10 9h1M5 10h1M7 10h1M9 10h1M11 10h1M4 11h1M6 11h1M8 11h1M10 11h1" stroke="#bbb" stroke-width="1" shape-rendering="crispEdges"/><path d="M3 4.6h9" stroke="#999" stroke-width=".8"/><path d="M13.2 3v3.2M11.6 4.6h3.2" stroke="#f00" stroke-width="1.3"/><rect x="12.7" y="6.2" width="1" height="1" fill="#ff0"/><rect x="12.7" y="7.2" width="1" height="1.2" fill="#0c0"/></svg>
<div class="a" style="left:354px;top:526px;width:1px;height:22px;background:#a9a9a9;"></div>
<div class="a" style="left:355px;top:526px;width:1px;height:22px;background:#fff;"></div>
<div class="a" style="left:358px;top:525px;width:200px;height:24px;border:1px solid #8a8a8a;border-radius:3px;background:linear-gradient(#f2f2f2,#ebebeb 45%,#dddddd 50%,#cfcfcf);box-shadow:inset 0 0 0 1px rgba(255,255,255,.6)"></div>
<div class="t" style="left:362px;top:530.5px;font-size:13px;color:#000;font-weight:bold;letter-spacing:0.1px">Timer1</div>
<svg class="i" style="left:545px;top:535px;width:8px;height:5px;" viewBox="0 0 8 5" shape-rendering="crispEdges"><path d="M0 0h8L4 5z" fill="#000"/></svg>
<div class="a" style="left:561px;top:526px;width:1px;height:22px;background:#a9a9a9;"></div>
<div class="a" style="left:563px;top:526px;width:1px;height:22px;background:#a9a9a9;"></div>
<div class="a" style="left:566px;top:525px;width:200px;height:24px;border:1px solid #8a8a8a;border-radius:3px;background:linear-gradient(#f2f2f2,#ebebeb 45%,#dddddd 50%,#cfcfcf);box-shadow:inset 0 0 0 1px rgba(255,255,255,.6)"></div>
<div class="t" style="left:570px;top:530.5px;font-size:13px;color:#000;font-weight:bold;letter-spacing:0.1px">TIMER</div>
<svg class="i" style="left:753px;top:535px;width:8px;height:5px;" viewBox="0 0 8 5" shape-rendering="crispEdges"><path d="M0 0h8L4 5z" fill="#000"/></svg>
<div class="a" style="left:770px;top:526px;width:1px;height:22px;background:#a9a9a9;"></div>
<div class="a" style="left:771px;top:526px;width:1px;height:22px;background:#fff;"></div>
<svg class="i" style="left:777px;top:529px;width:16px;height:16px;" viewBox="0 0 16 16" shape-rendering="crispEdges"><path d="M6 1h9M6 4h9M6 7h9M6 10h9M6 13h9M1 7h4M3 5l2 2-2 2M0 1h1M0 13h1" stroke="#a0a0a0" fill="none"/></svg>
<svg class="i" style="left:800px;top:529px;width:16px;height:16px;" viewBox="0 0 16 16" shape-rendering="crispEdges"><path d="M6 1h9M6 4h9M6 7h9M6 10h9M6 13h9M0 7h4M2 5L0 7l2 2" stroke="#a0a0a0" fill="none"/></svg>
<svg class="i" style="left:823px;top:529px;width:16px;height:16px;" viewBox="0 0 16 16" shape-rendering="crispEdges"><path d="M0 2h15M0 5h15M0 8h15M0 11h15M0 14h15" stroke="#a0a0a0" fill="none"/></svg>
<svg class="i" style="left:846px;top:529px;width:16px;height:16px;" viewBox="0 0 16 16" shape-rendering="crispEdges"><path d="M0 8h15M0 11h15M0 14h15M3 6c0-4 9-4 9 0" stroke="#a0a0a0" fill="none"/><rect x="4" y="2" width="7" height="4" fill="#a0a0a0"/></svg>
<div class="a" style="left:870px;top:526px;width:1px;height:22px;background:#a9a9a9;"></div>
<div class="a" style="left:871px;top:526px;width:1px;height:22px;background:#fff;"></div>
<svg class="i" style="left:878px;top:530px;width:16px;height:16px;" viewBox="0 0 16 16" shape-rendering="auto"><path d="M0 14L9 3" stroke="#000" stroke-width="1.2"/><path d="M6 6l4-4 5 5-3 4z" fill="#0000c0" stroke="#000" stroke-width=".6"/></svg>
<svg class="i" style="left:901px;top:530px;width:16px;height:16px;" viewBox="0 0 16 16" shape-rendering="auto"><path d="M1 15L9 6" stroke="#a0a0a0" stroke-width="1.2"/><circle cx="11" cy="11" r="4" fill="#a0a0a0"/><path d="M2 5c1-4 6-4 7 0" fill="none" stroke="#a0a0a0" stroke-width="1.3"/><path d="M0 3l2 3 3-2z" fill="#a0a0a0"/></svg>
<svg class="i" style="left:923px;top:530px;width:16px;height:16px;" viewBox="0 0 16 16" shape-rendering="auto"><path d="M1 15L9 6" stroke="#a0a0a0" stroke-width="1.2"/><circle cx="11" cy="11" r="4" fill="#a0a0a0"/><path d="M9 5c-1-4-6-4-7 0" fill="none" stroke="#a0a0a0" stroke-width="1.3"/><path d="M11 3l-2 3-3-2z" fill="#a0a0a0"/></svg>
<svg class="i" style="left:946px;top:530px;width:16px;height:16px;" viewBox="0 0 16 16" shape-rendering="auto"><path d="M1 15L9 6" stroke="#a0a0a0" stroke-width="1.2"/><circle cx="11" cy="11" r="4" fill="#a0a0a0"/><path d="M2 1l6 7M8 1L2 8" stroke="#a0a0a0" stroke-width="1.6"/></svg>
<div class="a" style="left:970px;top:526px;width:1px;height:22px;background:#a9a9a9;"></div>
<div class="a" style="left:318px;top:551px;width:654px;height:1px;background:#a0a0a0;"></div>
<div class="a" style="left:318px;top:552px;width:654px;height:1px;background:#6a6a6a;"></div>
<div class="a" style="left:318px;top:552px;width:2px;height:215px;background:#6a6a6a;"></div>
<div class="a" style="left:320px;top:553px;width:60px;height:197px;background:#efefef;"></div>
<div class="a" style="left:380px;top:553px;width:574px;height:197px;background:#fff;"></div>
<div class="a" style="left:954px;top:553px;width:16px;height:197px;background:#f0f0f0;border-left:1px solid #e6e6e6"></div>
<svg class="i" style="left:958px;top:559px;width:8px;height:6px;" viewBox="0 0 8 6" shape-rendering="crispEdges"><path d="M0 5L4 1l4 4z" fill="#8a8a8a"/></svg>
<svg class="i" style="left:958px;top:738px;width:8px;height:5px;" viewBox="0 0 8 5" shape-rendering="crispEdges"><path d="M0 0h8L4 4z" fill="#7a7a7a"/></svg>
<div class="a" style="left:320px;top:750px;width:634px;height:16px;background:#ebebeb;border-top:1px solid #e0e0e0"></div>
<svg class="i" style="left:326px;top:754px;width:5px;height:8px;" viewBox="0 0 5 8" shape-rendering="crispEdges"><path d="M5 0v8L0 4z" fill="#444"/></svg>
<svg class="i" style="left:943px;top:753px;width:5px;height:9px;" viewBox="0 0 5 9" shape-rendering="crispEdges"><path d="M0 0v9l5-4.5z" fill="#444"/></svg>
<div class="a" style="left:338px;top:750px;width:19px;height:15px;border:1px solid #8e8f8f;border-radius:2px;background:linear-gradient(#f3f3f3,#e5e5e5 50%,#d3d3d3)"></div>
<div class="a" style="left:343px;top:755px;width:1px;height:6px;background:#555;"></div>
<div class="a" style="left:346px;top:755px;width:1px;height:6px;background:#555;"></div>
<div class="a" style="left:349px;top:755px;width:1px;height:6px;background:#555;"></div>
<div class="a" style="left:954px;top:750px;width:16px;height:16px;background:#f0f0f0;"></div>
<div class="a" style="left:966px;top:755px;width:2px;height:2px;background:#a8a8a8;"></div>
<div class="a" style="left:966px;top:759px;width:2px;height:2px;background:#a8a8a8;"></div>
<div class="a" style="left:962px;top:759px;width:2px;height:2px;background:#a8a8a8;"></div>
<div class="a" style="left:966px;top:763px;width:2px;height:2px;background:#a8a8a8;"></div>
<div class="a" style="left:962px;top:763px;width:2px;height:2px;background:#a8a8a8;"></div>
<div class="a" style="left:958px;top:763px;width:2px;height:2px;background:#a8a8a8;"></div>
<div class="a" style="left:970px;top:552px;width:2px;height:216px;background:#fff;"></div>
<div class="a" style="left:318px;top:766px;width:654px;height:2px;background:#fff;"></div>
<div class="t" style="left:340.8px;top:555.4px;font-size:10px;color:#1f63d6;letter-spacing:0.45px">00001</div>
<div class="t" style="left:340.8px;top:570.4px;font-size:10px;color:#1f63d6;letter-spacing:0.45px">00002</div>
<div class="t" style="left:340.8px;top:585.4px;font-size:10px;color:#1f63d6;letter-spacing:0.45px">00003</div>
<div class="t" style="left:340.8px;top:600.4px;font-size:10px;color:#1f63d6;letter-spacing:0.45px">00004</div>
<div class="t" style="left:340.8px;top:615.4px;font-size:10px;color:#1f63d6;letter-spacing:0.45px">00005</div>
<div class="t" style="left:380.5px;top:555.0px;font-size:13.34px;font-family:Liberation Mono;font-weight:bold;white-space:pre"><span style="color:#ff0000">#</span><span style="color:#0000ff">include</span><span style="color:#000"> </span><span style="color:#ff0000">&lt;</span><span style="color:#000">PanelMain.h</span><span style="color:#ff0000">&gt;</span><span style="color:#000"> raw</span></div>
<div class="t" style="left:380.5px;top:585.0px;font-size:13.34px;font-family:Liberation Mono;font-weight:bold;white-space:pre"><span style="color:#0000ff">Sub</span><span style="color:#000"> Timer1_TIMER()</span></div>
<div class="t" style="left:380.5px;top:600.0px;font-size:13.34px;font-family:Liberation Mono;font-weight:bold;white-space:pre"><span style="color:#000">    PL1.State </span><span style="color:#ff0000">=</span><span style="color:#000"> </span><span style="color:#0000ff">IO</span><span style="color:#000">[</span><span style="color:#008080">25</span><span style="color:#000">]</span></div>
<div class="t" style="left:380.5px;top:615.0px;font-size:13.34px;font-family:Liberation Mono;font-weight:bold;white-space:pre"><span style="color:#0000ff">End</span><span style="color:#000"> </span><span style="color:#0000ff">Sub</span></div>

</body></html>
